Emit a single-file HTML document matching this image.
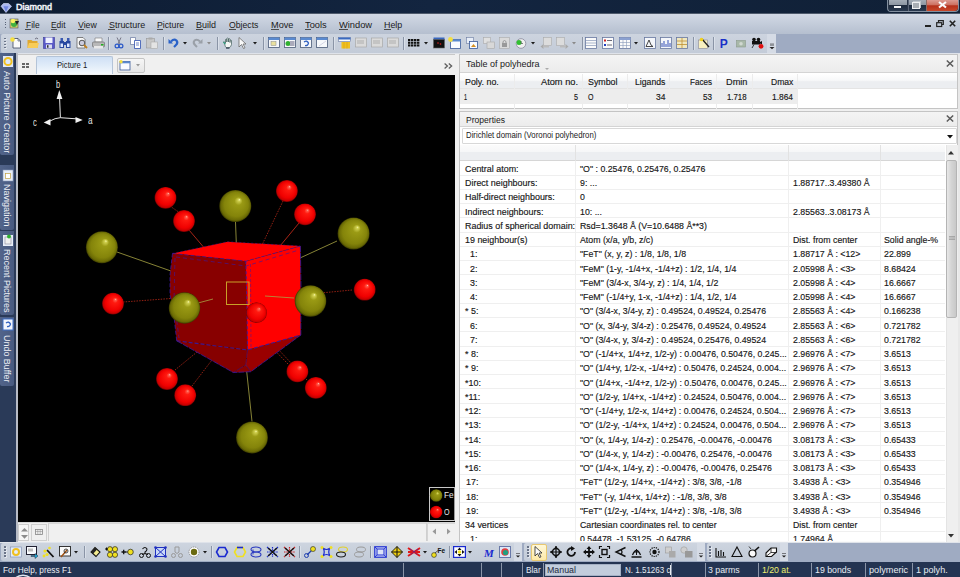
<!DOCTYPE html>
<html><head><meta charset="utf-8"><title>Diamond</title><style>
*{margin:0;padding:0;box-sizing:border-box}
html,body{width:960px;height:577px;overflow:hidden;background:#f0f0f0;font-family:"Liberation Sans",sans-serif;font-size:9px;color:#1e1e1e}
.a{position:absolute}
.t{position:absolute;white-space:pre;line-height:1}
.tb{-webkit-text-stroke:0.2px currentColor}
svg{position:absolute;overflow:visible}
</style></head><body>
<div class="a" style="left:0px;top:0px;width:960px;height:13px;background:linear-gradient(90deg,#0d1c32,#132540 45%,#102036)"></div><div class="a" style="left:0px;top:12.6px;width:960px;height:1.6px;background:#4e5a6c"></div><svg style="left:0px;top:2.5px" width="12" height="10" viewBox="0 0 12 10"><path d="M1 3.2L3.5 0.5H8.5L11.5 3.2L6 9.5Z" fill="#aab8f0" stroke="#dfe6ff" stroke-width="0.6"/><path d="M3.5 3.2H8.5L6 9" fill="#6f86e0"/></svg><div class="t" style="left:16.4px;top:2.71px;font-size:9.2px;color:#f4f6fa;transform:scaleX(0.9783);transform-origin:0 0;-webkit-text-stroke:0.45px #f4f6fa;text-shadow:0 0 1.5px rgba(200,220,240,0.4)">Diamond</div><div class="a" style="left:887px;top:0px;width:71.5px;height:11.5px;border:1px solid #8390a0;border-top:none;border-radius:0 0 4px 4px;background:#2a3648"></div><div class="a" style="left:888.5px;top:0px;width:18.5px;height:10.5px;background:linear-gradient(#a3acb6 0%,#8c96a2 45%,#1e2b3d 50%,#2a3a50 100%)"></div><div class="a" style="left:907.5px;top:0px;width:18px;height:10.5px;background:linear-gradient(#a3acb6 0%,#8c96a2 45%,#1e2b3d 50%,#2a3a50 100%);border-left:1px solid #5a6577"></div><div class="a" style="left:925.6px;top:0px;width:32px;height:10.5px;background:linear-gradient(#dc9a90 0%,#cc7060 45%,#b4301a 52%,#c8482a 100%);border-left:1px solid #8a6a64;border-radius:0 0 4px 0"></div><div class="a" style="left:894px;top:5.5px;width:7px;height:2px;background:#f4f6f8"></div><div class="a" style="left:912px;top:2px;width:7.5px;height:7px;border:1.7px solid #eef0f2;background:#a8aeb4;box-shadow:1px -1px 0 #c0c6cc"></div><svg style="left:937.5px;top:1.3px" width="9" height="7.5" viewBox="0 0 9 7.5"><path d="M1 1L8 6.5M8 1L1 6.5" stroke="#fbfbfb" stroke-width="2.2"/></svg><div class="a" style="left:0px;top:14.2px;width:960px;height:19.8px;background:linear-gradient(#d2d9e5,#b5bfcf)"></div><div class="a" style="left:4.5px;top:19.0px;width:1.2px;height:1.2px;background:#5a6478"></div><div class="a" style="left:4.5px;top:21.6px;width:1.2px;height:1.2px;background:#5a6478"></div><div class="a" style="left:4.5px;top:24.2px;width:1.2px;height:1.2px;background:#5a6478"></div><div class="a" style="left:4.5px;top:26.8px;width:1.2px;height:1.2px;background:#5a6478"></div><svg style="left:9px;top:18px" width="11" height="12" viewBox="0 0 11 12"><rect x="1" y="1" width="8" height="9" fill="#d8d070" stroke="#555" stroke-width="0.6"/><circle cx="5" cy="6" r="3" fill="#40b040"/><path d="M6 3h4l-2 4z" fill="#222"/><circle cx="4" cy="3" r="2.2" fill="#f8f060"/></svg><div class="t" style="left:25.7px;top:20.04px;font-size:9.4px;color:#1b1b1b;transform:scaleX(0.8986);transform-origin:0 0;">File</div><div class="a" style="left:25.4px;top:28.6px;width:5.752795031055898px;height:0.9px;background:#4a4a4a"></div><div class="t" style="left:51.25px;top:20.04px;font-size:9.4px;color:#1b1b1b;transform:scaleX(0.8973);transform-origin:0 0;">Edit</div><div class="a" style="left:50.95px;top:28.6px;width:6.209130434782607px;height:0.9px;background:#4a4a4a"></div><div class="t" style="left:77.8px;top:20.04px;font-size:9.4px;color:#1b1b1b;transform:scaleX(0.9302);transform-origin:0 0;">View</div><div class="a" style="left:77.5px;top:28.6px;width:6.414883720930231px;height:0.9px;background:#4a4a4a"></div><div class="t" style="left:108.7px;top:20.04px;font-size:9.4px;color:#1b1b1b;transform:scaleX(0.9523);transform-origin:0 0;">Structure</div><div class="a" style="left:108.4px;top:28.6px;width:6.553020961775586px;height:0.9px;background:#4a4a4a"></div><div class="t" style="left:157.0px;top:20.04px;font-size:9.4px;color:#1b1b1b;transform:scaleX(0.9304);transform-origin:0 0;">Picture</div><div class="a" style="left:156.7px;top:28.6px;width:6.416077170418004px;height:0.9px;background:#4a4a4a"></div><div class="t" style="left:196.3px;top:20.04px;font-size:9.4px;color:#1b1b1b;transform:scaleX(0.9563);transform-origin:0 0;">Build</div><div class="a" style="left:196.0px;top:28.6px;width:6.57752808988764px;height:0.9px;background:#4a4a4a"></div><div class="t" style="left:228.8px;top:20.04px;font-size:9.4px;color:#1b1b1b;transform:scaleX(0.9258);transform-origin:0 0;">Objects</div><div class="a" style="left:228.5px;top:28.6px;width:7.387610619469026px;height:0.9px;background:#4a4a4a"></div><div class="t" style="left:270.8px;top:20.04px;font-size:9.4px;color:#1b1b1b;transform:scaleX(0.979);transform-origin:0 0;">Move</div><div class="a" style="left:270.5px;top:28.6px;width:8.284049079754602px;height:0.9px;background:#4a4a4a"></div><div class="t" style="left:305.3px;top:20.04px;font-size:9.4px;color:#1b1b1b;transform:scaleX(0.9887);transform-origin:0 0;">Tools</div><div class="a" style="left:305.0px;top:28.6px;width:6.268950749464665px;height:0.9px;background:#4a4a4a"></div><div class="t" style="left:338.8px;top:20.04px;font-size:9.4px;color:#1b1b1b;transform:scaleX(0.9921);transform-origin:0 0;">Window</div><div class="a" style="left:338.5px;top:28.6px;width:9.412921348314603px;height:0.9px;background:#4a4a4a"></div><div class="t" style="left:384.2px;top:20.04px;font-size:9.4px;color:#1b1b1b;transform:scaleX(0.9474);transform-origin:0 0;">Help</div><div class="a" style="left:383.9px;top:28.6px;width:7.01167883211679px;height:0.9px;background:#4a4a4a"></div><div class="a" style="left:925px;top:25px;width:5.5px;height:1.8px;background:#222"></div><svg style="left:936px;top:20.3px" width="8" height="7" viewBox="0 0 8 7"><rect x="0.7" y="2.7" width="5" height="3.8" fill="none" stroke="#222" stroke-width="1.2"/><path d="M2.5 2.5V0.7H7.3V4.5H6" fill="none" stroke="#222" stroke-width="1.2"/></svg><svg style="left:948.6px;top:20.3px" width="7" height="7" viewBox="0 0 7 7"><path d="M0.8 0.8L6.2 6.2M6.2 0.8L0.8 6.2" stroke="#222" stroke-width="1.6"/></svg><div class="a" style="left:0px;top:34px;width:960px;height:19px;background:#9fabc2"></div><div class="a" style="left:0.5px;top:34.3px;width:775px;height:18.3px;background:linear-gradient(#cdd4df,#c3cbd8);border-radius:2px"></div><div class="a" style="left:767px;top:34.3px;width:8.5px;height:18.3px;background:#d5dbe5"></div><svg style="left:767.5px;top:44px" width="7" height="6" viewBox="0 0 7 6"><path d="M2 0H6M2 1.2H6" stroke="#333" stroke-width="0.6"/><path d="M1.5 3H6.5L4 5.2Z" fill="#222"/></svg><div class="a" style="left:0px;top:52.6px;width:960px;height:1.2px;background:#dfe3ea"></div><div class="a" style="left:4px;top:37.5px;width:1.5px;height:1.5px;background:#6a7488;box-shadow:0.7px 0.7px 0 #f4f6fa"></div><div class="a" style="left:4px;top:40.5px;width:1.5px;height:1.5px;background:#6a7488;box-shadow:0.7px 0.7px 0 #f4f6fa"></div><div class="a" style="left:4px;top:43.5px;width:1.5px;height:1.5px;background:#6a7488;box-shadow:0.7px 0.7px 0 #f4f6fa"></div><div class="a" style="left:4px;top:46.5px;width:1.5px;height:1.5px;background:#6a7488;box-shadow:0.7px 0.7px 0 #f4f6fa"></div><svg style="left:10px;top:37px" width="12" height="12" viewBox="0 0 12 12"><path d="M3 1.5H8L10.5 4V11H3Z" fill="#fafafa" stroke="#3c4660" stroke-width="0.8"/><path d="M8 1.5V4H10.5" fill="none" stroke="#3c4660" stroke-width="0.6"/><circle cx="2.5" cy="2.5" r="2.3" fill="#f6e040"/></svg><svg style="left:26.5px;top:37px" width="12" height="12" viewBox="0 0 12 12"><path d="M0.5 3H4.5L5.5 4H10.5V11H0.5Z" fill="#e0a830"/><path d="M2 6H12L10.5 11H0.5Z" fill="#f8cc58"/><path d="M8 2Q10 0 11 2" stroke="#556" fill="none" stroke-width="0.8"/></svg><svg style="left:43px;top:37px" width="12" height="12" viewBox="0 0 12 12"><rect x="0.5" y="0.5" width="11" height="11" fill="#5a5ac8" stroke="#3a3a98" stroke-width="0.6"/><rect x="2.5" y="0.5" width="7" height="5.5" fill="#eef0ff"/><rect x="3" y="7.5" width="6" height="4" fill="#d8dcf0"/><rect x="4" y="8.2" width="1.5" height="2.5" fill="#333"/></svg><svg style="left:59px;top:37px" width="12" height="12" viewBox="0 0 12 12"><rect x="0.5" y="4" width="4.5" height="7" fill="#2848a0"/><rect x="7" y="4" width="4.5" height="7" fill="#2848a0"/><rect x="4" y="5" width="4" height="3" fill="#2848a0"/><rect x="1.5" y="1" width="2.5" height="3" fill="#3858b0"/><rect x="8" y="1" width="2.5" height="3" fill="#3858b0"/><rect x="1.5" y="6.5" width="2.5" height="3.5" fill="#dde8ff"/><rect x="8" y="6.5" width="2.5" height="3.5" fill="#dde8ff"/></svg><svg style="left:76px;top:37px" width="12" height="12" viewBox="0 0 12 12"><path d="M1 0.5H7L9 2.5V11H1Z" fill="#f8f8f8" stroke="#555" stroke-width="0.7"/><circle cx="6" cy="6" r="2.8" fill="#ccd" stroke="#555" stroke-width="1"/><path d="M8 8L11 11" stroke="#c08020" stroke-width="1.8"/></svg><svg style="left:92px;top:37px" width="13" height="12" viewBox="0 0 13 12"><path d="M3 1H10V5H3Z" fill="#fafafa" stroke="#777" stroke-width="0.6"/><rect x="0.5" y="5" width="12" height="5" rx="1" fill="#b8b8b8" stroke="#666" stroke-width="0.6"/><rect x="2" y="9" width="9" height="2.5" fill="#e8e8e8"/><rect x="9" y="7" width="2.5" height="1.5" fill="#20b020"/></svg><div class="a" style="left:108.3px;top:37px;width:1px;height:13px;background:#8a94a6;box-shadow:1px 0 0 rgba(240,244,250,0.45)"></div><svg style="left:115px;top:37px" width="8" height="12" viewBox="0 0 8 12"><path d="M2 0.5L5 7M6 0.5L3 7" stroke="#778" stroke-width="1"/><circle cx="2" cy="9" r="1.9" fill="none" stroke="#2a58c8" stroke-width="1.2"/><circle cx="6" cy="9" r="1.9" fill="none" stroke="#2a58c8" stroke-width="1.2"/></svg><svg style="left:130px;top:37px" width="11" height="12" viewBox="0 0 11 12"><path d="M0.5 0.5H5.5V7.5H0.5Z" fill="#fff" stroke="#6878a0" stroke-width="0.7"/><path d="M4.5 3.5H10.5V11.5H4.5Z" fill="#fff" stroke="#3050b0" stroke-width="0.8"/><path d="M6 6H9M6 8H9" stroke="#3050b0" stroke-width="0.7"/></svg><svg style="left:146px;top:37px" width="12" height="12" viewBox="0 0 12 12"><rect x="0.5" y="1.5" width="8" height="9.5" fill="#c8c8c8" stroke="#999" stroke-width="0.6"/><rect x="2.5" y="0.5" width="4" height="2" fill="#aaa"/><rect x="5" y="5" width="6.5" height="6.5" fill="#e4e4e4" stroke="#aaa" stroke-width="0.6"/></svg><div class="a" style="left:162.5px;top:37px;width:1px;height:13px;background:#8a94a6;box-shadow:1px 0 0 rgba(240,244,250,0.45)"></div><svg style="left:168px;top:37px" width="11" height="12" viewBox="0 0 11 12"><path d="M3 4.5Q6 1.5 8.5 3.5Q10.5 6 7.5 8.5L6 10" fill="none" stroke="#2a62c8" stroke-width="2.2"/><path d="M0.5 2V6.5H5Z" fill="#2a62c8"/></svg><svg style="left:183px;top:41.5px" width="4" height="3" viewBox="0 0 4 3"><path d="M0 0H4L2 2.5Z" fill="#1a1a1a"/></svg><svg style="left:192.5px;top:37px" width="10" height="12" viewBox="0 0 10 12"><path d="M7 4.5Q4 1.5 1.5 3.5Q-0.5 6 2.5 8.5L4 10" fill="none" stroke="#9aa0a8" stroke-width="2"/><path d="M9.5 2V6.5H5Z" fill="#9aa0a8"/></svg><svg style="left:207px;top:41.5px" width="4" height="3" viewBox="0 0 4 3"><path d="M0 0H4L2 2.5Z" fill="#8a8a8a"/></svg><div class="a" style="left:216.7px;top:37px;width:1px;height:13px;background:#8a94a6;box-shadow:1px 0 0 rgba(240,244,250,0.45)"></div><svg style="left:221.5px;top:37px" width="12" height="12" viewBox="0 0 12 12"><path d="M2.5 6.5Q1 5 2 4.5L3.5 6V2.5Q4 1.5 4.8 2.5V5V1.5Q5.6 0.6 6.4 1.5V5V2Q7.2 1.2 8 2V5.5V3.5Q8.8 2.8 9.5 3.5V7.5Q9 10 7 10.8H4.5Q3 10 2.5 6.5Z" fill="#f4f6f4" stroke="#3c5a58" stroke-width="0.7"/><path d="M1.5 5.2L3.5 7" stroke="#2a9a7a" stroke-width="1.2"/><path d="M4 11H7.5" stroke="#2a3848" stroke-width="1.2"/></svg><svg style="left:238px;top:37px" width="8" height="12" viewBox="0 0 8 12"><path d="M1 0.5V10L3.5 7.5L5.5 11.5L7 10.8L5 7H8Z" fill="#fafafa" stroke="#6a6a6a" stroke-width="0.8"/></svg><svg style="left:253px;top:41.5px" width="4" height="3" viewBox="0 0 4 3"><path d="M0 0H4L2 2.5Z" fill="#1a1a1a"/></svg><div class="a" style="left:262.5px;top:37px;width:1px;height:13px;background:#8a94a6;box-shadow:1px 0 0 rgba(240,244,250,0.45)"></div><svg style="left:267.5px;top:37px" width="12" height="12" viewBox="0 0 12 12"><rect x="0.5" y="0.5" width="11" height="10" fill="#f6f8fb" stroke="#4a5a78" stroke-width="0.8"/><rect x="0.5" y="0.5" width="11" height="2.5" fill="#5a8ad0"/><rect x="3" y="4.5" width="5" height="4" fill="#e8e0a0" stroke="#888" stroke-width="0.5"/></svg><svg style="left:283.5px;top:37px" width="12" height="12" viewBox="0 0 12 12"><rect x="0.5" y="0.5" width="11" height="10" fill="#f6f8fb" stroke="#4a5a78" stroke-width="0.8"/><rect x="0.5" y="0.5" width="11" height="2.5" fill="#5a8ad0"/><circle cx="4" cy="6.5" r="2.5" fill="#30b030"/><rect x="6" y="4" width="4.5" height="5" fill="#aab" /></svg><svg style="left:300px;top:37px" width="12" height="12" viewBox="0 0 12 12"><rect x="0.5" y="0.5" width="11" height="10" fill="#f6f8fb" stroke="#4a5a78" stroke-width="0.8"/><rect x="0.5" y="0.5" width="11" height="2.5" fill="#5a8ad0"/><path d="M4 5Q7 3 8.5 6Q8 9 5 8.5" fill="none" stroke="#3060c0" stroke-width="1.3"/></svg><svg style="left:316.3px;top:37px" width="12" height="12" viewBox="0 0 12 12"><rect x="0.5" y="0.5" width="11" height="10" fill="#f6f8fb" stroke="#4a5a78" stroke-width="0.8"/><rect x="0.5" y="0.5" width="11" height="2.5" fill="#5a8ad0"/><path d="M3 9L10 4" stroke="#ccd" stroke-width="0.8"/></svg><div class="a" style="left:332.5px;top:37px;width:1px;height:13px;background:#8a94a6;box-shadow:1px 0 0 rgba(240,244,250,0.45)"></div><svg style="left:337.5px;top:37px" width="13" height="12" viewBox="0 0 13 12"><rect x="0.5" y="0.5" width="12" height="4" fill="#fafcff" stroke="#6a7aa0" stroke-width="0.6"/><rect x="0.5" y="0.5" width="12" height="2" fill="#3a6ac0"/><rect x="3.5" y="5" width="8.5" height="6.5" fill="#f0c020"/><path d="M6 5V11.5M9 5V11.5" stroke="#d8a010" stroke-width="0.6"/></svg><svg style="left:355px;top:37px" width="12" height="12" viewBox="0 0 12 12"><rect x="0.5" y="1" width="11" height="9" fill="#dadada" stroke="#a8a8a8" stroke-width="0.7"/><rect x="2" y="3" width="7" height="4" fill="#c4c4c4"/></svg><svg style="left:370.8px;top:37px" width="12" height="12" viewBox="0 0 12 12"><rect x="0.5" y="1" width="11" height="9" fill="#dadada" stroke="#a8a8a8" stroke-width="0.7"/><rect x="2" y="3" width="7" height="4" fill="#c4c4c4"/></svg><svg style="left:386.7px;top:37px" width="12" height="12" viewBox="0 0 12 12"><rect x="0.5" y="1" width="11" height="9" fill="#dadada" stroke="#a8a8a8" stroke-width="0.7"/><rect x="2" y="3" width="7" height="4" fill="#c4c4c4"/></svg><div class="a" style="left:403.3px;top:37px;width:1px;height:13px;background:#8a94a6;box-shadow:1px 0 0 rgba(240,244,250,0.45)"></div><svg style="left:408.3px;top:39px" width="12" height="8" viewBox="0 0 12 8"><rect x="0" y="0.0" width="2.4" height="2.1" fill="#111"/><rect x="3" y="0.0" width="2.4" height="2.1" fill="#111"/><rect x="6" y="0.0" width="2.4" height="2.1" fill="#111"/><rect x="9" y="0.0" width="2.4" height="2.1" fill="#111"/><rect x="0" y="2.7" width="2.4" height="2.1" fill="#111"/><rect x="3" y="2.7" width="2.4" height="2.1" fill="#111"/><rect x="6" y="2.7" width="2.4" height="2.1" fill="#111"/><rect x="9" y="2.7" width="2.4" height="2.1" fill="#111"/><rect x="0" y="5.4" width="2.4" height="2.1" fill="#111"/><rect x="3" y="5.4" width="2.4" height="2.1" fill="#111"/><rect x="6" y="5.4" width="2.4" height="2.1" fill="#111"/><rect x="9" y="5.4" width="2.4" height="2.1" fill="#111"/></svg><svg style="left:424px;top:41.5px" width="4" height="3" viewBox="0 0 4 3"><path d="M0 0H4L2 2.5Z" fill="#1a1a1a"/></svg><svg style="left:433px;top:37px" width="12" height="12" viewBox="0 0 12 12"><rect x="0.5" y="0.5" width="11" height="3" fill="#3a68c0"/><rect x="0.5" y="2.5" width="11" height="8.5" fill="#111" stroke="#666" stroke-width="0.6"/><circle cx="5" cy="6" r="0.8" fill="#e02020"/><circle cx="7.5" cy="7" r="0.8" fill="#e02020"/></svg><svg style="left:448.3px;top:37px" width="13" height="12" viewBox="0 0 13 12"><rect x="2.5" y="2.5" width="10" height="9" fill="#fafcff" stroke="#3a5a98" stroke-width="0.8"/><rect x="2.5" y="2.5" width="10" height="2" fill="#5a8ad0"/><circle cx="2.5" cy="2.5" r="2.4" fill="#f4e040"/></svg><svg style="left:465.8px;top:37px" width="12" height="12" viewBox="0 0 12 12"><rect x="0.5" y="0.5" width="7" height="6" fill="#e8eef8" stroke="#6a7aa0" stroke-width="0.6"/><rect x="3.5" y="4.5" width="8" height="7" fill="#fafcff" stroke="#3a5a98" stroke-width="0.8"/><path d="M5 10L7.5 7L10 10Z" fill="#d89020"/></svg><svg style="left:482.5px;top:37px" width="12" height="12" viewBox="0 0 12 12"><rect x="0.5" y="0.5" width="7" height="6" fill="#e0e0e0" stroke="#aaa" stroke-width="0.6"/><rect x="4" y="5" width="7.5" height="6.5" fill="#d8d8d8" stroke="#a8a8a8" stroke-width="0.6"/></svg><svg style="left:499.2px;top:37px" width="11" height="12" viewBox="0 0 11 12"><rect x="0.5" y="0.5" width="10" height="11" fill="#dadada" stroke="#aaa" stroke-width="0.6"/><rect x="3" y="6" width="5" height="4" fill="#999"/><path d="M4 6V4.5Q5.5 2.5 7 4.5V6" fill="none" stroke="#999"/></svg><svg style="left:515px;top:37px" width="11" height="12" viewBox="0 0 11 12"><circle cx="6" cy="6.5" r="4.8" fill="#f0f0f0" stroke="#889" stroke-width="0.8"/><circle cx="4" cy="5.5" r="2.5" fill="#30c030"/><path d="M6 4V6.5H8" stroke="#555" stroke-width="0.7" fill="none"/></svg><svg style="left:531px;top:41.5px" width="4" height="3" viewBox="0 0 4 3"><path d="M0 0H4L2 2.5Z" fill="#1a1a1a"/></svg><svg style="left:540px;top:37px" width="12" height="12" viewBox="0 0 12 12"><rect x="3.5" y="0.5" width="8" height="8" fill="#dcdcdc" stroke="#aaa" stroke-width="0.6"/><path d="M0.5 9.5L3.5 7V12Z" fill="#aaa"/><rect x="3" y="8.5" width="6" height="2" fill="#bbb"/></svg><svg style="left:555.8px;top:37px" width="13" height="12" viewBox="0 0 13 12"><rect x="0.5" y="0.5" width="8" height="8" fill="#dcdcdc" stroke="#aaa" stroke-width="0.6"/><path d="M12.5 9.5L9.5 7V12Z" fill="#aaa"/><rect x="4" y="8.5" width="6" height="2" fill="#bbb"/></svg><svg style="left:572px;top:41.5px" width="4" height="3" viewBox="0 0 4 3"><path d="M0 0H4L2 2.5Z" fill="#8a8a8a"/></svg><div class="a" style="left:582px;top:37px;width:1px;height:13px;background:#8a94a6;box-shadow:1px 0 0 rgba(240,244,250,0.45)"></div><svg style="left:585.2px;top:37px" width="12" height="12" viewBox="0 0 12 12"><rect x="0.5" y="0.5" width="11" height="11" fill="#fafafa" stroke="#6878a0" stroke-width="0.8"/><path d="M1 3.5H11M1 6H11M1 8.5H11" stroke="#8898b8" stroke-width="0.7"/></svg><svg style="left:601.9px;top:37px" width="12" height="12" viewBox="0 0 12 12"><rect x="0.5" y="0.5" width="11" height="11" fill="#fafafa" stroke="#6878a0" stroke-width="0.8"/><rect x="2" y="2.5" width="2" height="2" fill="#d02020"/><rect x="2" y="7" width="2" height="2" fill="#2040c0"/><path d="M5 3.5H10M5 8H10" stroke="#445" stroke-width="0.8"/></svg><svg style="left:618.5px;top:37px" width="12" height="12" viewBox="0 0 12 12"><rect x="0.5" y="0.5" width="11" height="11" fill="#fafafa" stroke="#6878a0" stroke-width="0.8"/><rect x="0.5" y="0.5" width="11" height="2.5" fill="#8aa0d0"/><path d="M1 5.5H11M1 8.5H11M4 3V11M7.5 3V11" stroke="#8898b8" stroke-width="0.6"/></svg><svg style="left:634px;top:41.5px" width="4" height="3" viewBox="0 0 4 3"><path d="M0 0H4L2 2.5Z" fill="#1a1a1a"/></svg><svg style="left:643.5px;top:37px" width="12" height="12" viewBox="0 0 12 12"><rect x="0.5" y="0.5" width="11" height="11" fill="#f4f6fa" stroke="#6878a0" stroke-width="0.8"/><path d="M2 9.5L5 3L7 8L9 9.5H2" fill="none" stroke="#333" stroke-width="0.9"/></svg><svg style="left:660px;top:37px" width="12" height="12" viewBox="0 0 12 12"><rect x="0.5" y="0.5" width="11" height="11" fill="#f4f6fa" stroke="#6878a0" stroke-width="0.8"/><path d="M2 10V6M4 10V4M6 10V7M8 10V3M10 10V6" stroke="#2040b0" stroke-width="0.9"/></svg><svg style="left:676px;top:37px" width="12" height="12" viewBox="0 0 12 12"><rect x="0.5" y="0.5" width="11" height="11" fill="#f0e8c0" stroke="#6878a0" stroke-width="0.8"/><path d="M1 4H11M1 7.5H11M6 1V11" stroke="#c09030" stroke-width="0.8"/></svg><div class="a" style="left:692.5px;top:37px;width:1px;height:13px;background:#8a94a6;box-shadow:1px 0 0 rgba(240,244,250,0.45)"></div><svg style="left:697.7px;top:37px" width="12" height="12" viewBox="0 0 12 12"><rect x="0.5" y="3" width="9" height="8.5" fill="#f8f0c0" stroke="#889" stroke-width="0.6"/><path d="M4 2L11 10" stroke="#222" stroke-width="1.4"/><circle cx="3.5" cy="2.5" r="1.8" fill="#f0d020"/></svg><div class="a" style="left:713.3px;top:37px;width:1px;height:13px;background:#8a94a6;box-shadow:1px 0 0 rgba(240,244,250,0.45)"></div><div class="t" style="left:719.8px;top:38.34px;font-size:12px;color:#1a30c8;font-weight:bold">P</div><svg style="left:736px;top:38px" width="10" height="10" viewBox="0 0 10 10"><rect x="0.5" y="2.5" width="9" height="6.5" fill="#a8b8a8" stroke="#8a9a8a" stroke-width="0.6"/><circle cx="5" cy="5.8" r="1.8" fill="#d0d8d0"/></svg><svg style="left:750.8px;top:37px" width="13" height="12" viewBox="0 0 13 12"><circle cx="3" cy="2.5" r="1.8" fill="#111"/><circle cx="7.5" cy="2.5" r="1.8" fill="#111"/><rect x="1" y="4" width="8" height="3.5" fill="#111"/><path d="M9 5L11 4V7.5L9 6.5Z" fill="#111"/><path d="M3 7.5L1 11" stroke="#111" stroke-width="0.8"/><circle cx="10" cy="9.3" r="2.4" fill="#e01010"/></svg>
<div class="a" style="left:0px;top:53px;width:15.6px;height:489px;background:#2a3a58"></div><div class="a" style="left:15.6px;top:53px;width:2.4px;height:489px;background:#b8bcc6"></div><div class="a" style="left:0px;top:53px;width:14.4px;height:102px;background:linear-gradient(90deg,#52648a,#485a80);border-radius:0 0 2px 2px"></div><div class="t" style="left:11.7px;top:71.30px;font-size:9.6px;color:#eef0f6;transform-origin:0 0;transform:rotate(90deg) scaleX(0.9462)">Auto Picture Creator</div><div class="a" style="left:0px;top:164.9px;width:14.4px;height:64.9px;background:linear-gradient(90deg,#52648a,#485a80);border-radius:0 0 2px 2px"></div><div class="t" style="left:11.7px;top:184.30px;font-size:9.6px;color:#eef0f6;transform-origin:0 0;transform:rotate(90deg) scaleX(0.9347)">Navigation</div><div class="a" style="left:0px;top:230.8px;width:14.4px;height:84.69999999999999px;background:linear-gradient(90deg,#52648a,#485a80);border-radius:0 0 2px 2px"></div><div class="t" style="left:11.7px;top:248.90px;font-size:9.6px;color:#eef0f6;transform-origin:0 0;transform:rotate(90deg) scaleX(0.9384)">Recent Pictures</div><div class="a" style="left:0px;top:316.5px;width:14.4px;height:69.30000000000001px;background:linear-gradient(90deg,#52648a,#485a80);border-radius:0 0 2px 2px"></div><div class="t" style="left:11.7px;top:334.70px;font-size:9.6px;color:#eef0f6;transform-origin:0 0;transform:rotate(90deg) scaleX(0.9320)">Undo Buffer</div><svg style="left:2.5px;top:55.5px" width="10" height="11" viewBox="0 0 10 11"><rect x="0" y="0" width="10" height="11" fill="#dfe8f8"/><circle cx="5" cy="5.5" r="3.6" fill="none" stroke="#f0c020" stroke-width="2"/></svg><svg style="left:2.5px;top:169.5px" width="10" height="11" viewBox="0 0 10 11"><rect x="0" y="0" width="10" height="11" fill="#e8eef8" stroke="#8898b8" stroke-width="0.6"/><rect x="2.5" y="3.5" width="5" height="5" fill="#fff" stroke="#c0a040" stroke-width="0.7"/></svg><svg style="left:2.5px;top:234px" width="10" height="12" viewBox="0 0 10 12"><rect x="0" y="1" width="10" height="11" fill="#e8eef8"/><rect x="2" y="3" width="6" height="7" fill="#f0f0f0" stroke="#889" stroke-width="0.6"/><circle cx="6" cy="2.5" r="2" fill="#30b030"/></svg><svg style="left:2.5px;top:319px" width="10" height="12" viewBox="0 0 10 12"><rect x="0" y="0" width="10" height="11" fill="#f4f6fc"/><rect x="0" y="0" width="10" height="11" fill="none" stroke="#4070c8" stroke-width="1"/><path d="M3 4Q6 2 7.5 5Q7 8 4 7.5" fill="none" stroke="#3060c0" stroke-width="1.3"/></svg>
<div class="a" style="left:18px;top:53.8px;width:437px;height:21px;background:#f0f0f0;border-top:1px solid #c8c8c8"></div><div class="a" style="left:22px;top:62.5px;width:3px;height:2.2px;background:#666"></div><div class="a" style="left:26.3px;top:62.5px;width:3px;height:2.2px;background:#666"></div><div class="a" style="left:22px;top:66.3px;width:3px;height:2.2px;background:#666"></div><div class="a" style="left:26.3px;top:66.3px;width:3px;height:2.2px;background:#666"></div><div class="a" style="left:36px;top:56.3px;width:76.5px;height:18px;background:linear-gradient(#cfe0f5,#e2edf9 55%,#f6f9fd);border:1px solid #b4c4d8;border-bottom:none;border-radius:2px 2px 0 0"></div><div class="t" style="left:57.2px;top:61.11px;font-size:9.2px;color:#1a1a1a;transform:scaleX(0.8348);transform-origin:0 0;">Picture 1</div><div class="a" style="left:116.5px;top:58px;width:28px;height:15px;background:linear-gradient(#f6f6f6,#e6e6e6);border:1px solid #c4c4c4;border-radius:2px"></div><svg style="left:118.5px;top:59.5px" width="12" height="11" viewBox="0 0 12 11"><rect x="1" y="1.5" width="10" height="8.5" fill="#fafcff" stroke="#3a5a98" stroke-width="0.8"/><rect x="1" y="1.5" width="10" height="1.8" fill="#5a8ad0"/><circle cx="2" cy="1.8" r="1.7" fill="#f4e040"/></svg><svg style="left:136.2px;top:63.5px" width="4" height="3" viewBox="0 0 4 3"><path d="M0 0H4L2 2.5Z" fill="#999"/></svg><svg style="left:443.8px;top:62.8px" width="9" height="6" viewBox="0 0 9 6"><path d="M0.6 0.6L3.4 3L0.6 5.4M4.8 0.6L7.6 3L4.8 5.4" fill="none" stroke="#5e5e5e" stroke-width="1.3"/></svg><div class="a" style="left:18px;top:74.6px;width:437px;height:447px;background:#000"></div><div class="a" style="left:18px;top:521.5px;width:437px;height:20px;background:#f0f0f0;border-top:1px solid #d8d8d8"></div><div class="a" style="left:18.2px;top:523.5px;width:10.8px;height:17.3px;border:1px solid #cdcdcd;background:#f6f6f6"></div><svg style="left:19.5px;top:526.5px" width="9" height="13" viewBox="0 0 9 13"><path d="M1 4.6H8L4.5 1Z" fill="#8c8c8c"/><path d="M1 8H8L4.5 11.8Z" fill="#8c8c8c"/></svg><div class="a" style="left:31.2px;top:523.5px;width:15.6px;height:17.3px;border:1px solid #d0d0d0;background:#f0f0f0"></div><svg style="left:34.5px;top:528.5px" width="8" height="6" viewBox="0 0 8 6"><rect x="0.5" y="0.5" width="7" height="5" fill="none" stroke="#888" stroke-width="0.8"/><path d="M0.5 2.5H7.5M2.8 0.5V5.5M5.2 0.5V5.5" stroke="#888" stroke-width="0.5"/></svg><div class="a" style="left:47.5px;top:523px;width:380px;height:18px;border-left:1px solid #d0d0d0;border-top:1px solid #d8d8d8"></div><div class="a" style="left:425.5px;top:523px;width:1px;height:18px;background:#cfcfcf"></div><div class="a" style="left:427px;top:523px;width:28px;height:18px;border-left:1px solid #d4d4d4;border-top:1px solid #d8d8d8"></div><svg style="left:432px;top:528px" width="5" height="7" viewBox="0 0 5 7"><path d="M4 0.5V6.5L0.5 3.5Z" fill="#999"/></svg><svg style="left:445.5px;top:528px" width="5" height="7" viewBox="0 0 5 7"><path d="M1 0.5V6.5L4.5 3.5Z" fill="#999"/></svg>
<svg style="left:0;top:0" width="960" height="577" viewBox="0 0 960 577"><defs>
<radialGradient id="gr" cx="0.5" cy="0.5" r="0.5" fx="0.63" fy="0.3"><stop offset="0" stop-color="#ffc8c0"/><stop offset="0.07" stop-color="#ff6050"/><stop offset="0.25" stop-color="#ff1a10"/><stop offset="0.75" stop-color="#f00000"/><stop offset="0.92" stop-color="#c80000"/><stop offset="1" stop-color="#700000"/></radialGradient>
<radialGradient id="gy" cx="0.5" cy="0.5" r="0.5" fx="0.63" fy="0.3"><stop offset="0" stop-color="#f8f8b0"/><stop offset="0.07" stop-color="#d0d050"/><stop offset="0.25" stop-color="#9a9a14"/><stop offset="0.75" stop-color="#84840a"/><stop offset="0.92" stop-color="#6a6a04"/><stop offset="1" stop-color="#3a3a00"/></radialGradient>
</defs><line x1="235.5" y1="222" x2="237" y2="262" stroke="#a8a444" stroke-width="0.8"/><line x1="117" y1="252" x2="205" y2="283" stroke="#a8a444" stroke-width="0.8"/><line x1="337" y1="241" x2="300" y2="258" stroke="#a8a444" stroke-width="0.8"/><line x1="252" y1="421.5" x2="246" y2="365" stroke="#a8a444" stroke-width="0.8"/><line x1="189" y1="230" x2="206" y2="250" stroke="#b82818" stroke-width="0.9"/><line x1="170" y1="206" x2="180" y2="213" stroke="#b82818" stroke-width="0.8" stroke-dasharray="1.5,1.2"/><line x1="283" y1="201" x2="262" y2="245" stroke="#b82818" stroke-width="0.8" stroke-dasharray="1.5,1.2"/><line x1="299" y1="223" x2="280" y2="246" stroke="#b82818" stroke-width="0.9"/><line x1="123" y1="302" x2="205" y2="296" stroke="#b82818" stroke-width="0.8" stroke-dasharray="1.5,1.2"/><line x1="352" y1="290" x2="300" y2="295" stroke="#b82818" stroke-width="0.8" stroke-dasharray="1.5,1.2"/><line x1="175" y1="370" x2="230" y2="325" stroke="#b82818" stroke-width="0.8" stroke-dasharray="1.5,1.2"/><line x1="192" y1="386" x2="235" y2="330" stroke="#b82818" stroke-width="0.8" stroke-dasharray="1.5,1.2"/><line x1="288" y1="364" x2="255" y2="330" stroke="#b82818" stroke-width="0.8" stroke-dasharray="1.5,1.2"/><line x1="307" y1="380" x2="262" y2="332" stroke="#b82818" stroke-width="0.8" stroke-dasharray="1.5,1.2"/><circle cx="165.5" cy="197.8" r="10.9" fill="url(#gr)"/><circle cx="184" cy="221" r="10.9" fill="url(#gr)"/><circle cx="286.9" cy="191" r="10.9" fill="url(#gr)"/><circle cx="305" cy="214.3" r="10.9" fill="url(#gr)"/><circle cx="113" cy="303.6" r="10.9" fill="url(#gr)"/><circle cx="364.7" cy="289.7" r="10.9" fill="url(#gr)"/><circle cx="167" cy="379" r="10.9" fill="url(#gr)"/><circle cx="185.2" cy="395.2" r="10.9" fill="url(#gr)"/><circle cx="297.4" cy="371.4" r="10.9" fill="url(#gr)"/><circle cx="315.8" cy="387.9" r="10.9" fill="url(#gr)"/><circle cx="235.3" cy="206" r="16" fill="url(#gy)"/><circle cx="101.9" cy="247.3" r="16" fill="url(#gy)"/><circle cx="353.6" cy="233.5" r="16" fill="url(#gy)"/><circle cx="252" cy="437.5" r="15.9" fill="url(#gy)"/><polygon points="172.5,253.4 227.6,241.7 300.4,246.1 245.8,261.2" fill="#ff0000" stroke="none" stroke-width="0.8"/><polygon points="176.7,340.8 247.5,350 245.8,365 233.3,372.5" fill="#860000" stroke="none" stroke-width="0.8"/><polygon points="247.5,350 300.8,335 250.8,371.7 245.8,365" fill="#9a0000" stroke="none" stroke-width="0.8"/><polygon points="245.8,365 250.8,371.7 233.3,372.5" fill="#8a0000" stroke="none" stroke-width="0.8"/><polygon points="172.5,253.4 245.8,261.2 247.5,350 176.7,340.8 173.3,310 170,295 170,275" fill="#880000" stroke="none" stroke-width="0.8"/><polygon points="245.8,261.2 300.4,246.1 300.8,335 247.5,350" fill="#ff0000" stroke="none" stroke-width="0.8"/><polyline points="172.5,253.4 245.8,261.2 300.4,246.1" fill="none" stroke="#3a1aa0" stroke-width="0.9" stroke-dasharray="4,2" opacity="0.8"/><polyline points="176,257 246,266 299,250" fill="none" stroke="#3a1aa0" stroke-width="0.9" stroke-dasharray="4,3" opacity="0.7"/><polyline points="172.5,253.4 227.6,241.7 300.4,246.1" fill="none" stroke="#3a1aa0" stroke-width="0.8" stroke-dasharray="2,2" opacity="0.6"/><polyline points="245.8,261.2 247,305 247.5,350" fill="none" stroke="#3a1aa0" stroke-width="1" stroke-dasharray="3,2" opacity="0.9"/><polyline points="250.5,264 251,347" fill="none" stroke="#3a1aa0" stroke-width="0.8" stroke-dasharray="3,2" opacity="0.6"/><polyline points="176.7,340.8 247.5,350 300.8,335" fill="none" stroke="#3a1aa0" stroke-width="1.1" stroke-dasharray="4,2" opacity="0.9"/><polyline points="172.5,253.4 170,275 170,295 173.3,310 176.7,340.8" fill="none" stroke="#3a1aa0" stroke-width="1" stroke-dasharray="4,2" opacity="0.8"/><polyline points="175,258 174,300 179,338" fill="none" stroke="#3a1aa0" stroke-width="0.9" stroke-dasharray="4,3" opacity="0.7"/><polyline points="300.4,246.1 301,290 300.8,335" fill="none" stroke="#3a1aa0" stroke-width="1" stroke-dasharray="6,1" opacity="0.8"/><polyline points="176.7,340.8 233.3,372.5 250.8,371.7 300.8,335" fill="none" stroke="#3a1aa0" stroke-width="0.9" stroke-dasharray="6,1" opacity="0.9"/><polyline points="247.5,350 245.8,365 233.3,372.5" fill="none" stroke="#3a1aa0" stroke-width="0.7" stroke-dasharray="8,1" opacity="0.7"/><polyline points="245.8,365 250.8,371.7" fill="none" stroke="#3a1aa0" stroke-width="0.7" stroke-dasharray="8,1" opacity="0.7"/><rect x="226.5" y="282" width="22.5" height="22.5" fill="none" stroke="#c8a028" stroke-width="1"/><line x1="198" y1="303" x2="213" y2="299" stroke="#a8a444" stroke-width="0.8"/><line x1="294" y1="298" x2="265" y2="296" stroke="#a8a444" stroke-width="0.8"/><circle cx="184.5" cy="308" r="15.7" fill="url(#gy)"/><circle cx="310.5" cy="301" r="15.8" fill="url(#gy)"/><circle cx="256.6" cy="312.8" r="10.3" fill="url(#gr)"/><path d="M60.4 117.7L59.6 98" stroke="#e6e6e6" stroke-width="1" fill="none"/><path d="M59.3 90L56.6 99H62.4Z" fill="#f0f0f0"/><path d="M50 121Q55 118 60.4 117.7L76 118.8" stroke="#e6e6e6" stroke-width="1" fill="none"/><path d="M82.7 120L75.5 117V123Z" fill="#f0f0f0"/><path d="M43.7 122.6L50.5 119V125.5Z" fill="#f0f0f0"/></svg><div class="t" style="left:56.3px;top:80.13px;font-size:10px;color:#e4e4e4;transform:scaleX(0.7387);transform-origin:0 0;">b</div><div class="t" style="left:87.5px;top:115.94px;font-size:10px;color:#e4e4e4;transform:scaleX(0.8214);transform-origin:0 0;">a</div><div class="t" style="left:33.3px;top:117.94px;font-size:10px;color:#e4e4e4;transform:scaleX(0.76);transform-origin:0 0;">c</div><div class="a" style="left:428.5px;top:487px;width:26px;height:34px;border:1px solid #c8c8c8;border-right-color:#9a9a9a;background:#000"></div><svg style="left:0;top:0" width="960" height="577"><circle cx="436.2" cy="495.5" r="6.3" fill="url(#gy)"/><circle cx="436.2" cy="512" r="6.3" fill="url(#gr)"/></svg><div class="t" style="left:444.0px;top:491.15px;font-size:8.8px;color:#e8e8e8;transform:scaleX(0.9364);transform-origin:0 0;">Fe</div><div class="t" style="left:444.0px;top:508.15px;font-size:8.8px;color:#e8e8e8;transform:scaleX(0.8159);transform-origin:0 0;">O</div>
<div class="a" style="left:455px;top:53.8px;width:4.5px;height:488px;background:#f0f0f0"></div><div class="a" style="left:459.3px;top:54.3px;width:499px;height:54.5px;background:#fff;border:1px solid #c4c4c4"></div><div class="a" style="left:460.3px;top:55.3px;width:497px;height:18.2px;background:linear-gradient(#f4f4f4,#ececec);border-bottom:1px solid #d4d4d4"></div><div class="t" style="left:465.7px;top:58.70px;font-size:9.8px;color:#1a1a1a;transform:scaleX(0.9174);transform-origin:0 0;">Table of polyhedra</div><svg style="left:544.5px;top:67.5px" width="4" height="3" viewBox="0 0 4 3"><path d="M0 0H4L2 2Z" fill="#aaa"/></svg><svg style="left:946.3px;top:60.2px" width="8" height="7" viewBox="0 0 8 7"><path d="M0.8 0.5L7.2 6.5M7.2 0.5L0.8 6.5" stroke="#5a5a5a" stroke-width="1.5"/></svg><div class="a" style="left:460.3px;top:73.5px;width:497px;height:15px;background:linear-gradient(#ffffff,#f7f8f9 45%,#eceef1 55%,#eceef1);border-bottom:1px solid #e4e4e4"></div><div class="a" style="left:514.3px;top:73.5px;width:1px;height:35px;background:#ececec"></div><div class="a" style="left:581.8px;top:73.5px;width:1px;height:35px;background:#ececec"></div><div class="a" style="left:626.9px;top:73.5px;width:1px;height:35px;background:#ececec"></div><div class="a" style="left:669.4px;top:73.5px;width:1px;height:35px;background:#ececec"></div><div class="a" style="left:715.9px;top:73.5px;width:1px;height:35px;background:#ececec"></div><div class="a" style="left:751.9px;top:73.5px;width:1px;height:35px;background:#ececec"></div><div class="a" style="left:797px;top:73.5px;width:1px;height:35px;background:#ececec"></div><div class="a" style="left:460.3px;top:88.5px;width:337px;height:15px;background:#ededed"></div><div class="t" style="left:464.6px;top:77.07px;font-size:9.6px;color:#161616;transform:scaleX(0.9229);transform-origin:0 0;-webkit-text-stroke:0.15px #161616">Poly. no.</div><div class="t" style="left:541.0px;top:77.07px;font-size:9.6px;color:#161616;transform:scaleX(0.9635);transform-origin:0 0;-webkit-text-stroke:0.15px #161616">Atom no.</div><div class="t" style="left:587.5px;top:77.07px;font-size:9.6px;color:#161616;transform:scaleX(0.9214);transform-origin:0 0;-webkit-text-stroke:0.15px #161616">Symbol</div><div class="t" style="left:634.6px;top:77.07px;font-size:9.6px;color:#161616;transform:scaleX(0.9035);transform-origin:0 0;-webkit-text-stroke:0.15px #161616">Ligands</div><div class="t" style="left:690.0px;top:77.07px;font-size:9.6px;color:#161616;transform:scaleX(0.841);transform-origin:0 0;-webkit-text-stroke:0.15px #161616">Faces</div><div class="t" style="left:726.0px;top:77.07px;font-size:9.6px;color:#161616;transform:scaleX(0.9591);transform-origin:0 0;-webkit-text-stroke:0.15px #161616">Dmin</div><div class="t" style="left:770.6px;top:77.07px;font-size:9.6px;color:#161616;transform:scaleX(0.894);transform-origin:0 0;-webkit-text-stroke:0.15px #161616">Dmax</div><div class="t" style="left:464.0px;top:91.97px;font-size:9.6px;color:#161616;transform:scaleX(0.5631);transform-origin:0 0;-webkit-text-stroke:0.15px #161616">1</div><div class="t" style="left:574.0px;top:91.97px;font-size:9.6px;color:#161616;transform:scaleX(0.7508);transform-origin:0 0;-webkit-text-stroke:0.15px #161616">5</div><div class="t" style="left:587.5px;top:91.97px;font-size:9.6px;color:#161616;transform:scaleX(0.7345);transform-origin:0 0;-webkit-text-stroke:0.15px #161616">O</div><div class="t" style="left:655.6px;top:91.97px;font-size:9.6px;color:#161616;transform:scaleX(0.8821);transform-origin:0 0;-webkit-text-stroke:0.15px #161616">34</div><div class="t" style="left:702.7px;top:91.97px;font-size:9.6px;color:#161616;transform:scaleX(0.8446);transform-origin:0 0;-webkit-text-stroke:0.15px #161616">53</div><div class="t" style="left:727.4px;top:91.97px;font-size:9.6px;color:#161616;transform:scaleX(0.815);transform-origin:0 0;-webkit-text-stroke:0.15px #161616">1.718</div><div class="t" style="left:772.0px;top:91.97px;font-size:9.6px;color:#161616;transform:scaleX(0.8733);transform-origin:0 0;-webkit-text-stroke:0.15px #161616">1.864</div><div class="a" style="left:459.3px;top:111px;width:499px;height:431px;background:#fff;border:1px solid #c4c4c4;border-bottom:none"></div><div class="a" style="left:460.3px;top:112px;width:497px;height:15px;background:linear-gradient(#f4f4f4,#ececec);border-bottom:1px solid #d4d4d4"></div><div class="t" style="left:465.5px;top:114.87px;font-size:9.6px;color:#1a1a1a;transform:scaleX(0.8909);transform-origin:0 0;">Properties</div><svg style="left:946.3px;top:115.3px" width="8" height="7" viewBox="0 0 8 7"><path d="M0.8 0.5L7.2 6.5M7.2 0.5L0.8 6.5" stroke="#5a5a5a" stroke-width="1.5"/></svg><div class="a" style="left:461.5px;top:128.3px;width:495px;height:15.6px;background:#fff;border:1px solid #d8d8d8;border-radius:1px"></div><div class="t" style="left:465.5px;top:131.34px;font-size:8.7px;color:#1a1a1a;transform:scaleX(0.8966);transform-origin:0 0;">Dirichlet domain (Voronoi polyhedron)</div><svg style="left:947.3px;top:134.5px" width="6" height="4" viewBox="0 0 6 4"><path d="M0 0H6L3 3.5Z" fill="#111"/></svg><div class="a" style="left:460.3px;top:145px;width:485px;height:15.5px;background:linear-gradient(#fbfbfb,#f6f7f8 45%,#eceef1 50%,#eceef1);border-bottom:1px solid #d6d6d6"></div><div class="a" style="left:574.8px;top:145px;width:1px;height:15.5px;background:#e2e2e2"></div><div class="a" style="left:788px;top:145px;width:1px;height:15.5px;background:#e2e2e2"></div><div class="a" style="left:879.7px;top:145px;width:1px;height:15.5px;background:#e2e2e2"></div><div class="a" style="left:574.8px;top:160.9px;width:1px;height:382px;background:#efefef"></div><div class="a" style="left:788px;top:160.9px;width:1px;height:382px;background:#efefef"></div><div class="a" style="left:879.7px;top:160.9px;width:1px;height:382px;background:#efefef"></div><div class="a" style="left:460.3px;top:174.65px;width:485px;height:1px;background:#efefef"></div><div class="a" style="left:460.3px;top:188.9px;width:485px;height:1px;background:#efefef"></div><div class="a" style="left:460.3px;top:203.15px;width:485px;height:1px;background:#efefef"></div><div class="a" style="left:460.3px;top:217.4px;width:485px;height:1px;background:#efefef"></div><div class="a" style="left:460.3px;top:231.65px;width:485px;height:1px;background:#efefef"></div><div class="a" style="left:460.3px;top:245.9px;width:485px;height:1px;background:#efefef"></div><div class="a" style="left:460.3px;top:260.15px;width:485px;height:1px;background:#efefef"></div><div class="a" style="left:460.3px;top:274.4px;width:485px;height:1px;background:#efefef"></div><div class="a" style="left:460.3px;top:288.65px;width:485px;height:1px;background:#efefef"></div><div class="a" style="left:460.3px;top:302.9px;width:485px;height:1px;background:#efefef"></div><div class="a" style="left:460.3px;top:317.15px;width:485px;height:1px;background:#efefef"></div><div class="a" style="left:460.3px;top:331.4px;width:485px;height:1px;background:#efefef"></div><div class="a" style="left:460.3px;top:345.65px;width:485px;height:1px;background:#efefef"></div><div class="a" style="left:460.3px;top:359.9px;width:485px;height:1px;background:#efefef"></div><div class="a" style="left:460.3px;top:374.15px;width:485px;height:1px;background:#efefef"></div><div class="a" style="left:460.3px;top:388.4px;width:485px;height:1px;background:#efefef"></div><div class="a" style="left:460.3px;top:402.65px;width:485px;height:1px;background:#efefef"></div><div class="a" style="left:460.3px;top:416.9px;width:485px;height:1px;background:#efefef"></div><div class="a" style="left:460.3px;top:431.15px;width:485px;height:1px;background:#efefef"></div><div class="a" style="left:460.3px;top:445.4px;width:485px;height:1px;background:#efefef"></div><div class="a" style="left:460.3px;top:459.65px;width:485px;height:1px;background:#efefef"></div><div class="a" style="left:460.3px;top:473.9px;width:485px;height:1px;background:#efefef"></div><div class="a" style="left:460.3px;top:488.15px;width:485px;height:1px;background:#efefef"></div><div class="a" style="left:460.3px;top:502.4px;width:485px;height:1px;background:#efefef"></div><div class="a" style="left:460.3px;top:516.65px;width:485px;height:1px;background:#efefef"></div><div class="a" style="left:460.3px;top:530.9px;width:485px;height:1px;background:#efefef"></div><div class="t" style="left:464.6px;top:163.97px;font-size:9.6px;color:#161616;transform:scaleX(0.93);transform-origin:0 0;-webkit-text-stroke:0.15px #161616">Central atom:</div><div class="t" style="left:579.5px;top:163.97px;font-size:9.6px;color:#161616;transform:scaleX(0.915);transform-origin:0 0;-webkit-text-stroke:0.15px #161616">"O" : 0.25476, 0.25476, 0.25476</div><div class="t" style="left:464.6px;top:178.22px;font-size:9.6px;color:#161616;transform:scaleX(0.93);transform-origin:0 0;-webkit-text-stroke:0.15px #161616">Direct neighbours:</div><div class="t" style="left:579.5px;top:178.22px;font-size:9.6px;color:#161616;transform:scaleX(0.915);transform-origin:0 0;-webkit-text-stroke:0.15px #161616">9: ...</div><div class="t" style="left:792.7px;top:178.22px;font-size:9.6px;color:#161616;transform:scaleX(0.915);transform-origin:0 0;-webkit-text-stroke:0.15px #161616">1.88717..3.49380 Å</div><div class="t" style="left:464.6px;top:192.47px;font-size:9.6px;color:#161616;transform:scaleX(0.93);transform-origin:0 0;-webkit-text-stroke:0.15px #161616">Half-direct neighbours:</div><div class="t" style="left:579.5px;top:192.47px;font-size:9.6px;color:#161616;transform:scaleX(0.915);transform-origin:0 0;-webkit-text-stroke:0.15px #161616">0</div><div class="t" style="left:464.6px;top:206.72px;font-size:9.6px;color:#161616;transform:scaleX(0.93);transform-origin:0 0;-webkit-text-stroke:0.15px #161616">Indirect neighbours:</div><div class="t" style="left:579.5px;top:206.72px;font-size:9.6px;color:#161616;transform:scaleX(0.915);transform-origin:0 0;-webkit-text-stroke:0.15px #161616">10: ...</div><div class="t" style="left:792.7px;top:206.72px;font-size:9.6px;color:#161616;transform:scaleX(0.915);transform-origin:0 0;-webkit-text-stroke:0.15px #161616">2.85563..3.08173 Å</div><div class="t" style="left:464.6px;top:220.97px;font-size:9.6px;color:#161616;transform:scaleX(0.93);transform-origin:0 0;-webkit-text-stroke:0.15px #161616">Radius of spherical domain:</div><div class="t" style="left:579.5px;top:220.97px;font-size:9.6px;color:#161616;transform:scaleX(0.915);transform-origin:0 0;-webkit-text-stroke:0.15px #161616">Rsd=1.3648 Å (V=10.6488 Å**3)</div><div class="t" style="left:464.6px;top:235.22px;font-size:9.6px;color:#161616;transform:scaleX(0.93);transform-origin:0 0;-webkit-text-stroke:0.15px #161616">19 neighbour(s)</div><div class="t" style="left:579.5px;top:235.22px;font-size:9.6px;color:#161616;transform:scaleX(0.915);transform-origin:0 0;-webkit-text-stroke:0.15px #161616">Atom (x/a, y/b, z/c)</div><div class="t" style="left:792.7px;top:235.22px;font-size:9.6px;color:#161616;transform:scaleX(0.915);transform-origin:0 0;-webkit-text-stroke:0.15px #161616">Dist. from center</div><div class="t" style="left:884.2px;top:235.22px;font-size:9.6px;color:#161616;transform:scaleX(0.915);transform-origin:0 0;-webkit-text-stroke:0.15px #161616">Solid angle-%</div><div class="t" style="left:464.6px;top:249.47px;font-size:9.6px;color:#161616;transform:scaleX(0.93);transform-origin:0 0;-webkit-text-stroke:0.15px #161616">  1:</div><div class="t" style="left:579.5px;top:249.47px;font-size:9.6px;color:#161616;transform:scaleX(0.915);transform-origin:0 0;-webkit-text-stroke:0.15px #161616">"FeT" (x, y, z) : 1/8, 1/8, 1/8</div><div class="t" style="left:792.7px;top:249.47px;font-size:9.6px;color:#161616;transform:scaleX(0.915);transform-origin:0 0;-webkit-text-stroke:0.15px #161616">1.88717 Å : &lt;12&gt;</div><div class="t" style="left:884.2px;top:249.47px;font-size:9.6px;color:#161616;transform:scaleX(0.915);transform-origin:0 0;-webkit-text-stroke:0.15px #161616">22.899</div><div class="t" style="left:464.6px;top:263.72px;font-size:9.6px;color:#161616;transform:scaleX(0.93);transform-origin:0 0;-webkit-text-stroke:0.15px #161616">  2:</div><div class="t" style="left:579.5px;top:263.72px;font-size:9.6px;color:#161616;transform:scaleX(0.915);transform-origin:0 0;-webkit-text-stroke:0.15px #161616">"FeM" (1-y, -1/4+x, -1/4+z) : 1/2, 1/4, 1/4</div><div class="t" style="left:792.7px;top:263.72px;font-size:9.6px;color:#161616;transform:scaleX(0.915);transform-origin:0 0;-webkit-text-stroke:0.15px #161616">2.05998 Å : &lt;3&gt;</div><div class="t" style="left:884.2px;top:263.72px;font-size:9.6px;color:#161616;transform:scaleX(0.915);transform-origin:0 0;-webkit-text-stroke:0.15px #161616">8.68424</div><div class="t" style="left:464.6px;top:277.97px;font-size:9.6px;color:#161616;transform:scaleX(0.93);transform-origin:0 0;-webkit-text-stroke:0.15px #161616">  3:</div><div class="t" style="left:579.5px;top:277.97px;font-size:9.6px;color:#161616;transform:scaleX(0.915);transform-origin:0 0;-webkit-text-stroke:0.15px #161616">"FeM" (3/4-x, 3/4-y, z) : 1/4, 1/4, 1/2</div><div class="t" style="left:792.7px;top:277.97px;font-size:9.6px;color:#161616;transform:scaleX(0.915);transform-origin:0 0;-webkit-text-stroke:0.15px #161616">2.05998 Å : &lt;4&gt;</div><div class="t" style="left:884.2px;top:277.97px;font-size:9.6px;color:#161616;transform:scaleX(0.915);transform-origin:0 0;-webkit-text-stroke:0.15px #161616">16.6667</div><div class="t" style="left:464.6px;top:292.22px;font-size:9.6px;color:#161616;transform:scaleX(0.93);transform-origin:0 0;-webkit-text-stroke:0.15px #161616">  4:</div><div class="t" style="left:579.5px;top:292.22px;font-size:9.6px;color:#161616;transform:scaleX(0.915);transform-origin:0 0;-webkit-text-stroke:0.15px #161616">"FeM" (-1/4+y, 1-x, -1/4+z) : 1/4, 1/2, 1/4</div><div class="t" style="left:792.7px;top:292.22px;font-size:9.6px;color:#161616;transform:scaleX(0.915);transform-origin:0 0;-webkit-text-stroke:0.15px #161616">2.05998 Å : &lt;4&gt;</div><div class="t" style="left:884.2px;top:292.22px;font-size:9.6px;color:#161616;transform:scaleX(0.915);transform-origin:0 0;-webkit-text-stroke:0.15px #161616">16.6667</div><div class="t" style="left:464.6px;top:306.47px;font-size:9.6px;color:#161616;transform:scaleX(0.93);transform-origin:0 0;-webkit-text-stroke:0.15px #161616">* 5:</div><div class="t" style="left:579.5px;top:306.47px;font-size:9.6px;color:#161616;transform:scaleX(0.915);transform-origin:0 0;-webkit-text-stroke:0.15px #161616">"O" (3/4-x, 3/4-y, z) : 0.49524, 0.49524, 0.25476</div><div class="t" style="left:792.7px;top:306.47px;font-size:9.6px;color:#161616;transform:scaleX(0.915);transform-origin:0 0;-webkit-text-stroke:0.15px #161616">2.85563 Å : &lt;4&gt;</div><div class="t" style="left:884.2px;top:306.47px;font-size:9.6px;color:#161616;transform:scaleX(0.915);transform-origin:0 0;-webkit-text-stroke:0.15px #161616">0.166238</div><div class="t" style="left:464.6px;top:320.72px;font-size:9.6px;color:#161616;transform:scaleX(0.93);transform-origin:0 0;-webkit-text-stroke:0.15px #161616">  6:</div><div class="t" style="left:579.5px;top:320.72px;font-size:9.6px;color:#161616;transform:scaleX(0.915);transform-origin:0 0;-webkit-text-stroke:0.15px #161616">"O" (x, 3/4-y, 3/4-z) : 0.25476, 0.49524, 0.49524</div><div class="t" style="left:792.7px;top:320.72px;font-size:9.6px;color:#161616;transform:scaleX(0.915);transform-origin:0 0;-webkit-text-stroke:0.15px #161616">2.85563 Å : &lt;6&gt;</div><div class="t" style="left:884.2px;top:320.72px;font-size:9.6px;color:#161616;transform:scaleX(0.915);transform-origin:0 0;-webkit-text-stroke:0.15px #161616">0.721782</div><div class="t" style="left:464.6px;top:334.97px;font-size:9.6px;color:#161616;transform:scaleX(0.93);transform-origin:0 0;-webkit-text-stroke:0.15px #161616">  7:</div><div class="t" style="left:579.5px;top:334.97px;font-size:9.6px;color:#161616;transform:scaleX(0.915);transform-origin:0 0;-webkit-text-stroke:0.15px #161616">"O" (3/4-x, y, 3/4-z) : 0.49524, 0.25476, 0.49524</div><div class="t" style="left:792.7px;top:334.97px;font-size:9.6px;color:#161616;transform:scaleX(0.915);transform-origin:0 0;-webkit-text-stroke:0.15px #161616">2.85563 Å : &lt;6&gt;</div><div class="t" style="left:884.2px;top:334.97px;font-size:9.6px;color:#161616;transform:scaleX(0.915);transform-origin:0 0;-webkit-text-stroke:0.15px #161616">0.721782</div><div class="t" style="left:464.6px;top:349.22px;font-size:9.6px;color:#161616;transform:scaleX(0.93);transform-origin:0 0;-webkit-text-stroke:0.15px #161616">* 8:</div><div class="t" style="left:579.5px;top:349.22px;font-size:9.6px;color:#161616;transform:scaleX(0.915);transform-origin:0 0;-webkit-text-stroke:0.15px #161616">"O" (-1/4+x, 1/4+z, 1/2-y) : 0.00476, 0.50476, 0.245...</div><div class="t" style="left:792.7px;top:349.22px;font-size:9.6px;color:#161616;transform:scaleX(0.915);transform-origin:0 0;-webkit-text-stroke:0.15px #161616">2.96976 Å : &lt;7&gt;</div><div class="t" style="left:884.2px;top:349.22px;font-size:9.6px;color:#161616;transform:scaleX(0.915);transform-origin:0 0;-webkit-text-stroke:0.15px #161616">3.6513</div><div class="t" style="left:464.6px;top:363.47px;font-size:9.6px;color:#161616;transform:scaleX(0.93);transform-origin:0 0;-webkit-text-stroke:0.15px #161616">* 9:</div><div class="t" style="left:579.5px;top:363.47px;font-size:9.6px;color:#161616;transform:scaleX(0.915);transform-origin:0 0;-webkit-text-stroke:0.15px #161616">"O" (1/4+y, 1/2-x, -1/4+z) : 0.50476, 0.24524, 0.004...</div><div class="t" style="left:792.7px;top:363.47px;font-size:9.6px;color:#161616;transform:scaleX(0.915);transform-origin:0 0;-webkit-text-stroke:0.15px #161616">2.96976 Å : &lt;7&gt;</div><div class="t" style="left:884.2px;top:363.47px;font-size:9.6px;color:#161616;transform:scaleX(0.915);transform-origin:0 0;-webkit-text-stroke:0.15px #161616">3.6513</div><div class="t" style="left:464.6px;top:377.72px;font-size:9.6px;color:#161616;transform:scaleX(0.93);transform-origin:0 0;-webkit-text-stroke:0.15px #161616">*10:</div><div class="t" style="left:579.5px;top:377.72px;font-size:9.6px;color:#161616;transform:scaleX(0.915);transform-origin:0 0;-webkit-text-stroke:0.15px #161616">"O" (1/4+x, -1/4+z, 1/2-y) : 0.50476, 0.00476, 0.245...</div><div class="t" style="left:792.7px;top:377.72px;font-size:9.6px;color:#161616;transform:scaleX(0.915);transform-origin:0 0;-webkit-text-stroke:0.15px #161616">2.96976 Å : &lt;7&gt;</div><div class="t" style="left:884.2px;top:377.72px;font-size:9.6px;color:#161616;transform:scaleX(0.915);transform-origin:0 0;-webkit-text-stroke:0.15px #161616">3.6513</div><div class="t" style="left:464.6px;top:391.97px;font-size:9.6px;color:#161616;transform:scaleX(0.93);transform-origin:0 0;-webkit-text-stroke:0.15px #161616">*11:</div><div class="t" style="left:579.5px;top:391.97px;font-size:9.6px;color:#161616;transform:scaleX(0.915);transform-origin:0 0;-webkit-text-stroke:0.15px #161616">"O" (1/2-y, 1/4+x, -1/4+z) : 0.24524, 0.50476, 0.004...</div><div class="t" style="left:792.7px;top:391.97px;font-size:9.6px;color:#161616;transform:scaleX(0.915);transform-origin:0 0;-webkit-text-stroke:0.15px #161616">2.96976 Å : &lt;7&gt;</div><div class="t" style="left:884.2px;top:391.97px;font-size:9.6px;color:#161616;transform:scaleX(0.915);transform-origin:0 0;-webkit-text-stroke:0.15px #161616">3.6513</div><div class="t" style="left:464.6px;top:406.22px;font-size:9.6px;color:#161616;transform:scaleX(0.93);transform-origin:0 0;-webkit-text-stroke:0.15px #161616">*12:</div><div class="t" style="left:579.5px;top:406.22px;font-size:9.6px;color:#161616;transform:scaleX(0.915);transform-origin:0 0;-webkit-text-stroke:0.15px #161616">"O" (-1/4+y, 1/2-x, 1/4+z) : 0.00476, 0.24524, 0.504...</div><div class="t" style="left:792.7px;top:406.22px;font-size:9.6px;color:#161616;transform:scaleX(0.915);transform-origin:0 0;-webkit-text-stroke:0.15px #161616">2.96976 Å : &lt;7&gt;</div><div class="t" style="left:884.2px;top:406.22px;font-size:9.6px;color:#161616;transform:scaleX(0.915);transform-origin:0 0;-webkit-text-stroke:0.15px #161616">3.6513</div><div class="t" style="left:464.6px;top:420.47px;font-size:9.6px;color:#161616;transform:scaleX(0.93);transform-origin:0 0;-webkit-text-stroke:0.15px #161616">*13:</div><div class="t" style="left:579.5px;top:420.47px;font-size:9.6px;color:#161616;transform:scaleX(0.915);transform-origin:0 0;-webkit-text-stroke:0.15px #161616">"O" (1/2-y, -1/4+x, 1/4+z) : 0.24524, 0.00476, 0.504...</div><div class="t" style="left:792.7px;top:420.47px;font-size:9.6px;color:#161616;transform:scaleX(0.915);transform-origin:0 0;-webkit-text-stroke:0.15px #161616">2.96976 Å : &lt;7&gt;</div><div class="t" style="left:884.2px;top:420.47px;font-size:9.6px;color:#161616;transform:scaleX(0.915);transform-origin:0 0;-webkit-text-stroke:0.15px #161616">3.6513</div><div class="t" style="left:464.6px;top:434.72px;font-size:9.6px;color:#161616;transform:scaleX(0.93);transform-origin:0 0;-webkit-text-stroke:0.15px #161616">*14:</div><div class="t" style="left:579.5px;top:434.72px;font-size:9.6px;color:#161616;transform:scaleX(0.915);transform-origin:0 0;-webkit-text-stroke:0.15px #161616">"O" (x, 1/4-y, 1/4-z) : 0.25476, -0.00476, -0.00476</div><div class="t" style="left:792.7px;top:434.72px;font-size:9.6px;color:#161616;transform:scaleX(0.915);transform-origin:0 0;-webkit-text-stroke:0.15px #161616">3.08173 Å : &lt;3&gt;</div><div class="t" style="left:884.2px;top:434.72px;font-size:9.6px;color:#161616;transform:scaleX(0.915);transform-origin:0 0;-webkit-text-stroke:0.15px #161616">0.65433</div><div class="t" style="left:464.6px;top:448.97px;font-size:9.6px;color:#161616;transform:scaleX(0.93);transform-origin:0 0;-webkit-text-stroke:0.15px #161616">*15:</div><div class="t" style="left:579.5px;top:448.97px;font-size:9.6px;color:#161616;transform:scaleX(0.915);transform-origin:0 0;-webkit-text-stroke:0.15px #161616">"O" (1/4-x, y, 1/4-z) : -0.00476, 0.25476, -0.00476</div><div class="t" style="left:792.7px;top:448.97px;font-size:9.6px;color:#161616;transform:scaleX(0.915);transform-origin:0 0;-webkit-text-stroke:0.15px #161616">3.08173 Å : &lt;3&gt;</div><div class="t" style="left:884.2px;top:448.97px;font-size:9.6px;color:#161616;transform:scaleX(0.915);transform-origin:0 0;-webkit-text-stroke:0.15px #161616">0.65433</div><div class="t" style="left:464.6px;top:463.22px;font-size:9.6px;color:#161616;transform:scaleX(0.93);transform-origin:0 0;-webkit-text-stroke:0.15px #161616">*16:</div><div class="t" style="left:579.5px;top:463.22px;font-size:9.6px;color:#161616;transform:scaleX(0.915);transform-origin:0 0;-webkit-text-stroke:0.15px #161616">"O" (1/4-x, 1/4-y, z) : -0.00476, -0.00476, 0.25476</div><div class="t" style="left:792.7px;top:463.22px;font-size:9.6px;color:#161616;transform:scaleX(0.915);transform-origin:0 0;-webkit-text-stroke:0.15px #161616">3.08173 Å : &lt;3&gt;</div><div class="t" style="left:884.2px;top:463.22px;font-size:9.6px;color:#161616;transform:scaleX(0.915);transform-origin:0 0;-webkit-text-stroke:0.15px #161616">0.65433</div><div class="t" style="left:466.1px;top:477.47px;font-size:9.6px;color:#161616;transform:scaleX(0.93);transform-origin:0 0;-webkit-text-stroke:0.15px #161616">17:</div><div class="t" style="left:579.5px;top:477.47px;font-size:9.6px;color:#161616;transform:scaleX(0.915);transform-origin:0 0;-webkit-text-stroke:0.15px #161616">"FeT" (1/2-y, 1/4+x, -1/4+z) : 3/8, 3/8, -1/8</div><div class="t" style="left:792.7px;top:477.47px;font-size:9.6px;color:#161616;transform:scaleX(0.915);transform-origin:0 0;-webkit-text-stroke:0.15px #161616">3.4938 Å : &lt;3&gt;</div><div class="t" style="left:884.2px;top:477.47px;font-size:9.6px;color:#161616;transform:scaleX(0.915);transform-origin:0 0;-webkit-text-stroke:0.15px #161616">0.354946</div><div class="t" style="left:466.1px;top:491.72px;font-size:9.6px;color:#161616;transform:scaleX(0.93);transform-origin:0 0;-webkit-text-stroke:0.15px #161616">18:</div><div class="t" style="left:579.5px;top:491.72px;font-size:9.6px;color:#161616;transform:scaleX(0.915);transform-origin:0 0;-webkit-text-stroke:0.15px #161616">"FeT" (-y, 1/4+x, 1/4+z) : -1/8, 3/8, 3/8</div><div class="t" style="left:792.7px;top:491.72px;font-size:9.6px;color:#161616;transform:scaleX(0.915);transform-origin:0 0;-webkit-text-stroke:0.15px #161616">3.4938 Å : &lt;3&gt;</div><div class="t" style="left:884.2px;top:491.72px;font-size:9.6px;color:#161616;transform:scaleX(0.915);transform-origin:0 0;-webkit-text-stroke:0.15px #161616">0.354946</div><div class="t" style="left:466.1px;top:505.97px;font-size:9.6px;color:#161616;transform:scaleX(0.93);transform-origin:0 0;-webkit-text-stroke:0.15px #161616">19:</div><div class="t" style="left:579.5px;top:505.97px;font-size:9.6px;color:#161616;transform:scaleX(0.915);transform-origin:0 0;-webkit-text-stroke:0.15px #161616">"FeT" (1/2-y, -1/4+x, 1/4+z) : 3/8, -1/8, 3/8</div><div class="t" style="left:792.7px;top:505.97px;font-size:9.6px;color:#161616;transform:scaleX(0.915);transform-origin:0 0;-webkit-text-stroke:0.15px #161616">3.4938 Å : &lt;3&gt;</div><div class="t" style="left:884.2px;top:505.97px;font-size:9.6px;color:#161616;transform:scaleX(0.915);transform-origin:0 0;-webkit-text-stroke:0.15px #161616">0.354946</div><div class="t" style="left:464.6px;top:520.22px;font-size:9.6px;color:#161616;transform:scaleX(0.93);transform-origin:0 0;-webkit-text-stroke:0.15px #161616">34 vertices</div><div class="t" style="left:579.5px;top:520.22px;font-size:9.6px;color:#161616;transform:scaleX(0.915);transform-origin:0 0;-webkit-text-stroke:0.15px #161616">Cartesian coordinates rel. to center</div><div class="t" style="left:792.7px;top:520.22px;font-size:9.6px;color:#161616;transform:scaleX(0.915);transform-origin:0 0;-webkit-text-stroke:0.15px #161616">Dist. from center</div><div class="t" style="left:464.6px;top:534.47px;font-size:9.6px;color:#161616;transform:scaleX(0.93);transform-origin:0 0;-webkit-text-stroke:0.15px #161616">  1:</div><div class="t" style="left:579.5px;top:534.47px;font-size:9.6px;color:#161616;transform:scaleX(0.915);transform-origin:0 0;-webkit-text-stroke:0.15px #161616">0.54478, -1.53125, -0.64786</div><div class="t" style="left:792.7px;top:534.47px;font-size:9.6px;color:#161616;transform:scaleX(0.915);transform-origin:0 0;-webkit-text-stroke:0.15px #161616">1.74964 Å</div><div class="a" style="left:460.3px;top:540.5px;width:485px;height:1.5px;background:#fafafa"></div><div class="a" style="left:945.5px;top:145px;width:12px;height:397px;background:#efefef;border-left:1px solid #e4e4e4"></div><svg style="left:948px;top:151px" width="6" height="4" viewBox="0 0 6 4"><path d="M0 3.5H6L3 0Z" fill="#333"/></svg><div class="a" style="left:946.3px;top:160.2px;width:11px;height:158px;background:linear-gradient(90deg,#e8e8e8,#d4d4d4 50%,#c8c8c8);border:1px solid #b4b4b4;border-radius:2px"></div><svg style="left:948.5px;top:236px" width="6" height="4" viewBox="0 0 6 4"><path d="M0 0.5H6M0 2H6M0 3.5H6" stroke="#8a8a8a" stroke-width="0.6"/></svg><svg style="left:948px;top:533.5px" width="6" height="4" viewBox="0 0 6 4"><path d="M0 0H6L3 3.5Z" fill="#333"/></svg><div class="a" style="left:958px;top:53.8px;width:2px;height:488px;background:#e8e8e8"></div>
<div class="a" style="left:0px;top:541.8px;width:960px;height:20.2px;background:#9fabc2"></div><div class="a" style="left:0px;top:541.8px;width:960px;height:1px;background:#dfe3ea"></div><div class="a" style="left:0.5px;top:542.8px;width:521px;height:18.7px;background:linear-gradient(#cdd4df,#c3cbd8);border-radius:2px"></div><div class="a" style="left:513.5px;top:542.8px;width:8px;height:18.7px;background:#d5dbe5"></div><svg style="left:514.5px;top:553px" width="6" height="6" viewBox="0 0 6 6"><path d="M1 0.5H5" stroke="#333" stroke-width="0.6"/><path d="M0.8 2.5H5.2L3 4.6Z" fill="#222"/></svg><div class="a" style="left:523.5px;top:542.8px;width:181px;height:18.7px;background:linear-gradient(#cdd4df,#c3cbd8);border-radius:2px"></div><div class="a" style="left:696.5px;top:542.8px;width:8px;height:18.7px;background:#d5dbe5"></div><svg style="left:697.5px;top:553px" width="6" height="6" viewBox="0 0 6 6"><path d="M1 0.5H5" stroke="#333" stroke-width="0.6"/><path d="M0.8 2.5H5.2L3 4.6Z" fill="#222"/></svg><div class="a" style="left:706.5px;top:542.8px;width:81px;height:18.7px;background:linear-gradient(#cdd4df,#c3cbd8);border-radius:2px"></div><div class="a" style="left:779.5px;top:542.8px;width:8px;height:18.7px;background:#d5dbe5"></div><svg style="left:780.5px;top:553px" width="6" height="6" viewBox="0 0 6 6"><path d="M1 0.5H5" stroke="#333" stroke-width="0.6"/><path d="M0.8 2.5H5.2L3 4.6Z" fill="#222"/></svg><div class="a" style="left:4px;top:546px;width:1.5px;height:1.5px;background:#6a7488;box-shadow:0.7px 0.7px 0 #f4f6fa"></div><div class="a" style="left:4px;top:549px;width:1.5px;height:1.5px;background:#6a7488;box-shadow:0.7px 0.7px 0 #f4f6fa"></div><div class="a" style="left:4px;top:552px;width:1.5px;height:1.5px;background:#6a7488;box-shadow:0.7px 0.7px 0 #f4f6fa"></div><div class="a" style="left:4px;top:555px;width:1.5px;height:1.5px;background:#6a7488;box-shadow:0.7px 0.7px 0 #f4f6fa"></div><div class="a" style="left:527px;top:546px;width:1.5px;height:1.5px;background:#6a7488;box-shadow:0.7px 0.7px 0 #f4f6fa"></div><div class="a" style="left:527px;top:549px;width:1.5px;height:1.5px;background:#6a7488;box-shadow:0.7px 0.7px 0 #f4f6fa"></div><div class="a" style="left:527px;top:552px;width:1.5px;height:1.5px;background:#6a7488;box-shadow:0.7px 0.7px 0 #f4f6fa"></div><div class="a" style="left:527px;top:555px;width:1.5px;height:1.5px;background:#6a7488;box-shadow:0.7px 0.7px 0 #f4f6fa"></div><div class="a" style="left:709px;top:546px;width:1.5px;height:1.5px;background:#6a7488;box-shadow:0.7px 0.7px 0 #f4f6fa"></div><div class="a" style="left:709px;top:549px;width:1.5px;height:1.5px;background:#6a7488;box-shadow:0.7px 0.7px 0 #f4f6fa"></div><div class="a" style="left:709px;top:552px;width:1.5px;height:1.5px;background:#6a7488;box-shadow:0.7px 0.7px 0 #f4f6fa"></div><div class="a" style="left:709px;top:555px;width:1.5px;height:1.5px;background:#6a7488;box-shadow:0.7px 0.7px 0 #f4f6fa"></div><svg style="left:10px;top:546px" width="12" height="12" viewBox="0 0 12 12"><rect x="0.5" y="1" width="11" height="10" fill="#e4ecf8" stroke="#7a8ab0" stroke-width="0.6"/><circle cx="6" cy="6" r="3" fill="none" stroke="#f0c020" stroke-width="2"/></svg><svg style="left:26px;top:546px" width="12" height="12" viewBox="0 0 12 12"><rect x="0.5" y="0.5" width="10" height="8" fill="#fafcff" stroke="#223" stroke-width="1"/><rect x="2" y="2.5" width="5" height="3" fill="#bbb"/><path d="M5 9.5H9V7.5L12 10L9 12.5V10.5H5Z" fill="#20b0e0" stroke="#223" stroke-width="0.5"/></svg><svg style="left:42px;top:546px" width="12" height="12" viewBox="0 0 12 12"><path d="M5 4L11.5 11" stroke="#111" stroke-width="1.8"/><circle cx="3" cy="5" r="1.6" fill="#f0e020"/><circle cx="5" cy="8.5" r="1.6" fill="#f0e020"/><circle cx="2" cy="10" r="1.4" fill="#f0e020"/><circle cx="7.5" cy="2" r="1.3" fill="#f0e020"/></svg><svg style="left:59px;top:546px" width="12" height="12" viewBox="0 0 12 12"><rect x="0.5" y="0.5" width="11" height="9.5" fill="#fafafa" stroke="#222" stroke-width="0.9"/><path d="M2 11L8 4" stroke="#a05010" stroke-width="1.4"/><circle cx="7" cy="5" r="2" fill="none" stroke="#222" stroke-width="0.8"/></svg><svg style="left:74px;top:550.5px" width="4" height="3" viewBox="0 0 4 3"><path d="M0 0H4L2 2.5Z" fill="#1a1a1a"/></svg><div class="a" style="left:84px;top:546px;width:1px;height:12px;background:#8a94a6;box-shadow:1px 0 0 rgba(240,244,250,0.45)"></div><svg style="left:90px;top:546px" width="11" height="12" viewBox="0 0 11 12"><path d="M1 6L5 1.5L10 6L6 10.5Z" fill="#f4ec90" stroke="#111" stroke-width="1.1"/><path d="M1 6L5 1.5L7 3.5L3 8Z" fill="#222"/></svg><svg style="left:105px;top:546px" width="13" height="12" viewBox="0 0 13 12"><circle cx="5" cy="3.2" r="2.6" fill="#f0e020" stroke="#222" stroke-width="0.7"/><circle cx="10" cy="3.2" r="2.6" fill="#f0e020" stroke="#222" stroke-width="0.7"/><circle cx="5" cy="8.8" r="2.6" fill="#f0e020" stroke="#222" stroke-width="0.7"/><circle cx="10" cy="8.8" r="2.6" fill="#f0e020" stroke="#222" stroke-width="0.7"/><path d="M0 3H3M1.5 1.5V4.5" stroke="#111" stroke-width="1"/></svg><svg style="left:121px;top:546px" width="13" height="12" viewBox="0 0 13 12"><path d="M0.5 6H5M2.7 3.8V8.2" stroke="#111" stroke-width="1.3"/><path d="M5 6H7" stroke="#111" stroke-width="1"/><circle cx="9.5" cy="6" r="2.8" fill="#f0e020" stroke="#222" stroke-width="0.7"/></svg><svg style="left:139px;top:546px" width="12" height="12" viewBox="0 0 12 12"><circle cx="2.5" cy="9.5" r="2" fill="none" stroke="#111" stroke-width="1"/><circle cx="9.5" cy="9.5" r="2" fill="none" stroke="#111" stroke-width="1"/><path d="M3.5 3Q6 0 8 3Q8 5 6 6V7.5M6 7.5L3 8.5M6 7.5L9 8.5" fill="none" stroke="#111" stroke-width="1.1"/></svg><svg style="left:154px;top:546px" width="13" height="12" viewBox="0 0 13 12"><rect x="1.5" y="1.5" width="10" height="9" fill="#c8d8f8" stroke="#2030c0" stroke-width="1"/><path d="M1.5 1.5L11.5 10.5M11.5 1.5L1.5 10.5" stroke="#2030c0" stroke-width="1"/><circle cx="1.5" cy="1.5" r="1.3" fill="#2030c0"/><circle cx="11.5" cy="1.5" r="1.3" fill="#2030c0"/><circle cx="1.5" cy="10.5" r="1.3" fill="#2030c0"/><circle cx="11.5" cy="10.5" r="1.3" fill="#2030c0"/></svg><svg style="left:171px;top:546px" width="12" height="12" viewBox="0 0 12 12"><circle cx="2.5" cy="9.5" r="2" fill="none" stroke="#999" stroke-width="1"/><circle cx="9.5" cy="9.5" r="2" fill="none" stroke="#999" stroke-width="1"/><path d="M4 1H8V6L6 7.5L4 6Z" fill="none" stroke="#999" stroke-width="1"/></svg><svg style="left:187.5px;top:546px" width="12" height="12" viewBox="0 0 12 12"><circle cx="6" cy="6" r="5" fill="#fff" stroke="#777" stroke-width="0.8" stroke-dasharray="1.2,0.8"/><circle cx="6" cy="6" r="3.2" fill="#6a6a10"/></svg><svg style="left:203px;top:550.5px" width="4" height="3" viewBox="0 0 4 3"><path d="M0 0H4L2 2.5Z" fill="#1a1a1a"/></svg><div class="a" style="left:211px;top:546px;width:1px;height:12px;background:#8a94a6;box-shadow:1px 0 0 rgba(240,244,250,0.45)"></div><svg style="left:216px;top:546px" width="12" height="12" viewBox="0 0 12 12"><path d="M3 1.5H9L11.5 6L9 10.5H3L0.5 6Z" fill="none" stroke="#1a2ad0" stroke-width="1.6"/></svg><svg style="left:234px;top:546px" width="12" height="12" viewBox="0 0 12 12"><path d="M3 1.5H9L11.5 6L9 10.5H3L0.5 6Z" fill="none" stroke="#f0e020" stroke-width="1.6"/><path d="M3 1.5H9" stroke="#1a2ad0" stroke-width="1.6"/></svg><svg style="left:250px;top:546px" width="12" height="12" viewBox="0 0 12 12"><ellipse cx="6" cy="3.5" rx="5" ry="2.5" fill="none" stroke="#2a3ac0" stroke-width="1.1"/><ellipse cx="6" cy="8.5" rx="5" ry="2.5" fill="none" stroke="#2a3ac0" stroke-width="1.1"/><path d="M3 3.5V8.5" stroke="#2a3ac0" stroke-width="1"/></svg><svg style="left:266px;top:546px" width="13" height="12" viewBox="0 0 13 12"><path d="M1 1L12 11M12 1L1 11M6.5 1V11M1 6H12" stroke="#1a2ad0" stroke-width="1.2" stroke-dasharray="1.5,0.8"/><path d="M2 2L11 10M11 2L2 10" stroke="#111" stroke-width="1.3"/></svg><svg style="left:283px;top:546px" width="13" height="12" viewBox="0 0 13 12"><path d="M1 1L12 11M12 1L1 11M6.5 1V11M1 6H12" stroke="#d02020" stroke-width="1.2" stroke-dasharray="1.5,0.8"/><path d="M2 2L11 10M11 2L2 10" stroke="#111" stroke-width="1.3"/></svg><div class="a" style="left:299px;top:546px;width:1px;height:12px;background:#8a94a6;box-shadow:1px 0 0 rgba(240,244,250,0.45)"></div><svg style="left:304px;top:546px" width="12" height="12" viewBox="0 0 12 12"><path d="M3 9L8.5 3.5" stroke="#2040b0" stroke-width="1.3"/><circle cx="9" cy="3" r="2.5" fill="#f0e020" stroke="#222" stroke-width="0.6"/><circle cx="2.5" cy="9.5" r="2" fill="none" stroke="#2040b0" stroke-width="1"/></svg><svg style="left:320px;top:546px" width="13" height="12" viewBox="0 0 13 12"><path d="M3 2Q6.5 5 10 2M3 10Q6.5 7 10 10M3 2Q5.5 6 3 10M10 2Q7.5 6 10 10" fill="none" stroke="#1a2ad0" stroke-width="1.2"/><circle cx="2" cy="1.5" r="1.5" fill="#f0e020"/><circle cx="11" cy="1.5" r="1.5" fill="#f0e020"/><circle cx="2" cy="10.5" r="1.5" fill="#f0e020"/><circle cx="11" cy="10.5" r="1.5" fill="#f0e020"/></svg><svg style="left:336px;top:546px" width="13" height="12" viewBox="0 0 13 12"><ellipse cx="7" cy="3.5" rx="4.5" ry="2.5" fill="none" stroke="#e0d030" stroke-width="1.1"/><ellipse cx="5" cy="8.5" rx="4.5" ry="2.5" fill="none" stroke="#222" stroke-width="1.1"/></svg><svg style="left:354px;top:546px" width="12" height="12" viewBox="0 0 12 12"><ellipse cx="7" cy="3.5" rx="4.5" ry="2.5" fill="none" stroke="#999" stroke-width="1"/><ellipse cx="5" cy="8.5" rx="4.5" ry="2.5" fill="none" stroke="#999" stroke-width="1"/></svg><div class="a" style="left:369.5px;top:546px;width:1px;height:12px;background:#8a94a6;box-shadow:1px 0 0 rgba(240,244,250,0.45)"></div><svg style="left:374px;top:546px" width="13" height="12" viewBox="0 0 13 12"><rect x="0.8" y="0.8" width="11.4" height="10.4" fill="#dde4f8" stroke="#1a2ad0" stroke-width="1.2"/><rect x="3" y="3" width="7" height="6" fill="none" stroke="#1a2ad0" stroke-width="1"/><path d="M0.8 0.8L3 3M12.2 0.8L10 3M0.8 11.2L3 9M12.2 11.2L10 9" stroke="#1a2ad0" stroke-width="0.8"/></svg><svg style="left:391px;top:546px" width="12" height="12" viewBox="0 0 12 12"><path d="M6 0.5L11.5 6L6 11.5L0.5 6Z" fill="#f0d010" stroke="#111" stroke-width="0.9"/><path d="M6 0.5V11.5M0.5 6H11.5" stroke="#111" stroke-width="1"/></svg><svg style="left:407px;top:546px" width="14" height="12" viewBox="0 0 14 12"><path d="M1 2L13 10M13 2L1 10M1 6H13" stroke="#e01818" stroke-width="2"/><path d="M3 3L11 9M11 3L3 9" stroke="#1a2ad0" stroke-width="0.8" stroke-dasharray="1,1"/></svg><svg style="left:422.5px;top:550.5px" width="4" height="3" viewBox="0 0 4 3"><path d="M0 0H4L2 2.5Z" fill="#1a1a1a"/></svg><svg style="left:431px;top:546px" width="14" height="12" viewBox="0 0 14 12"><circle cx="3" cy="9" r="2.4" fill="#f0e020" stroke="#222" stroke-width="0.6"/><path d="M4 7L7 4.5" stroke="#222" stroke-width="0.7"/></svg><div class="t" style="left:437.5px;top:548.00px;font-size:6.5px;color:#111;font-weight:bold">Fe</div><div class="a" style="left:449px;top:546px;width:1px;height:12px;background:#8a94a6;box-shadow:1px 0 0 rgba(240,244,250,0.45)"></div><svg style="left:452.5px;top:546px" width="13" height="12" viewBox="0 0 13 12"><rect x="0.6" y="0.6" width="11.8" height="10.8" fill="#fff" stroke="#1a2ad0" stroke-width="1.2"/><path d="M6.5 1.5L8.5 4H4.5ZM6.5 10.5L8.5 8H4.5ZM1.5 6L4 4V8ZM11.5 6L9 4V8Z" fill="#111"/><circle cx="6.5" cy="6" r="1.8" fill="#f0e020"/></svg><svg style="left:468px;top:550.5px" width="4" height="3" viewBox="0 0 4 3"><path d="M0 0H4L2 2.5Z" fill="#1a1a1a"/></svg><div class="t" style="left:484px;top:548.19px;font-size:11px;color:#1a2ad0;font-family:'Liberation Serif';font-style:italic;font-weight:bold">M</div><svg style="left:499px;top:546px" width="12" height="12" viewBox="0 0 12 12"><rect x="0.5" y="0.5" width="11" height="11" fill="#dde8f8" stroke="#6878a8" stroke-width="1"/><circle cx="6" cy="6" r="3.8" fill="#e04040"/><circle cx="6.5" cy="6.5" r="2.6" fill="#20a080"/></svg><div class="a" style="left:530.5px;top:543.5px;width:16px;height:17.5px;background:linear-gradient(#fff8d8,#fde9a8);border:1px solid #e8c870;border-radius:2px"></div><svg style="left:534px;top:546px" width="8" height="12" viewBox="0 0 8 12"><path d="M1 0.5V10L3.5 7.5L5.5 11.5L7 10.8L5 7H8Z" fill="#fafafa" stroke="#222" stroke-width="0.8"/></svg><svg style="left:550px;top:546px" width="12" height="12" viewBox="0 0 12 12"><circle cx="6" cy="6" r="3.5" fill="none" stroke="#111" stroke-width="1.6"/><path d="M6 0V12M0 6H12" stroke="#111" stroke-width="1.2"/><path d="M6 0L4.5 2H7.5ZM6 12L4.5 10H7.5ZM0 6L2 4.5V7.5ZM12 6L10 4.5V7.5Z" fill="#111"/></svg><svg style="left:566px;top:546px" width="11" height="12" viewBox="0 0 11 12"><path d="M9 6A3.8 3.8 0 1 1 6 2.3" fill="none" stroke="#111" stroke-width="1.8"/><path d="M5 0L9 2.5L5 5Z" fill="#111"/></svg><svg style="left:582.5px;top:546px" width="12" height="12" viewBox="0 0 12 12"><path d="M6 1V11M1 6H11" stroke="#111" stroke-width="1.8"/><path d="M6 0L3.5 3H8.5ZM6 12L3.5 9H8.5ZM0 6L3 3.5V8.5ZM12 6L9 3.5V8.5Z" fill="#111"/></svg><svg style="left:599px;top:546px" width="11" height="12" viewBox="0 0 11 12"><rect x="3" y="3.5" width="5" height="5" fill="none" stroke="#111" stroke-width="1.4"/><path d="M0.5 3V0.5H3M8 0.5H10.5V3M0.5 9V11.5H3M8 11.5H10.5V9" fill="none" stroke="#111" stroke-width="1.2"/></svg><svg style="left:615px;top:546px" width="11" height="12" viewBox="0 0 11 12"><path d="M10.5 1.5L1 6L10.5 10.5" fill="none" stroke="#111" stroke-width="1.4"/><path d="M6 3.5Q8 6 6 8.5" fill="none" stroke="#111" stroke-width="1.2"/></svg><svg style="left:631px;top:546px" width="11" height="12" viewBox="0 0 11 12"><path d="M0.5 11H10.5M1.5 9Q5.5 0 9.5 9" fill="none" stroke="#111" stroke-width="1.3"/><path d="M3.5 6H7.5M5.5 3V9" stroke="#111" stroke-width="1"/></svg><svg style="left:649px;top:546px" width="11" height="12" viewBox="0 0 11 12"><circle cx="5.5" cy="6" r="4.5" fill="none" stroke="#111" stroke-width="1.2" stroke-dasharray="1.2,1"/><circle cx="5.5" cy="6" r="2.2" fill="#111"/></svg><svg style="left:664.5px;top:546px" width="11" height="12" viewBox="0 0 11 12"><rect x="0.5" y="1" width="6" height="6" fill="#cfcfcf" stroke="#9a9a9a" stroke-width="0.6"/><rect x="4" y="5" width="6.5" height="6.5" fill="#aaa"/></svg><svg style="left:680px;top:546px" width="13" height="12" viewBox="0 0 13 12"><circle cx="4" cy="4" r="3.2" fill="#cfcfcf" stroke="#9a9a9a" stroke-width="0.6"/><rect x="5" y="5" width="7.5" height="6.5" fill="#999"/></svg><svg style="left:715px;top:546px" width="11" height="12" viewBox="0 0 11 12"><path d="M1 2V11H11M3.5 10V5M6 10V4M8.5 10V6" fill="none" stroke="#111" stroke-width="1.1"/></svg><svg style="left:731px;top:546px" width="12" height="12" viewBox="0 0 12 12"><path d="M6 1L11 10.5H1Z" fill="none" stroke="#111" stroke-width="1.1"/></svg><svg style="left:747.5px;top:546px" width="12" height="12" viewBox="0 0 12 12"><circle cx="4.5" cy="7.5" r="3.5" fill="#fafafa" stroke="#111" stroke-width="1.2"/><path d="M6.5 5L11 1" stroke="#111" stroke-width="1.6"/><path d="M3 3L1 0.5" stroke="#111" stroke-width="0.8"/></svg><svg style="left:764.5px;top:546px" width="12" height="12" viewBox="0 0 12 12"><path d="M1 7L6 2H11.5V6L6.5 10.5H1Z" fill="#fafafa" stroke="#111" stroke-width="1.1"/><path d="M6 2V6.5M6 6.5H11.5M6 6.5L1 10.5" fill="none" stroke="#111" stroke-width="0.8"/></svg><div class="a" style="left:0px;top:562px;width:960px;height:15px;background:#243452"></div><div class="a" style="left:402.5px;top:563px;width:1px;height:14px;background:#8a94a8"></div><div class="a" style="left:480.5px;top:563px;width:1px;height:14px;background:#8a94a8"></div><div class="a" style="left:500.5px;top:563px;width:1px;height:14px;background:#8a94a8"></div><div class="a" style="left:521.9px;top:563px;width:1px;height:14px;background:#8a94a8"></div><div class="a" style="left:542.7px;top:563px;width:1px;height:14px;background:#8a94a8"></div><div class="a" style="left:671.3px;top:563px;width:1px;height:14px;background:#8a94a8"></div><div class="a" style="left:704.7px;top:563px;width:1px;height:14px;background:#8a94a8"></div><div class="a" style="left:758px;top:563px;width:1px;height:14px;background:#8a94a8"></div><div class="a" style="left:811.4px;top:563px;width:1px;height:14px;background:#8a94a8"></div><div class="a" style="left:864.5px;top:563px;width:1px;height:14px;background:#8a94a8"></div><div class="a" style="left:912.3px;top:563px;width:1px;height:14px;background:#8a94a8"></div><div class="a" style="left:544.7px;top:564px;width:76.2px;height:11.8px;background:#c2cddc;border:1px solid #a4b0c4"></div><svg style="left:14px;top:573.5px" width="18" height="4" viewBox="0 0 18 4"><path d="M1 4Q9 -1.5 17 4" fill="none" stroke="#dfe6f0" stroke-width="1.4"/></svg><div class="t" style="left:2.5px;top:565.44px;font-size:9.4px;color:#eef0f4;transform:scaleX(0.8833);transform-origin:0 0;">For Help, press F1</div><div class="t" style="left:525.9px;top:565.44px;font-size:9.4px;color:#e8ecf2;transform:scaleX(0.8845);transform-origin:0 0;">Blar</div><div class="t" style="left:547.0px;top:565.44px;font-size:9.4px;color:#1e2a40;transform:scaleX(0.9406);transform-origin:0 0;">Manual</div><div class="t" style="left:624.8px;top:565.44px;font-size:9.4px;color:#e8ecf2;transform:scaleX(0.8556);transform-origin:0 0;">N. 1.51263 c</div><div class="a" style="left:670.2px;top:564.5px;width:0.8px;height:10px;background:#e8ecf2"></div><div class="t" style="left:708.4px;top:565.44px;font-size:9.4px;color:#e8ecf2;transform:scaleX(0.9371);transform-origin:0 0;">3 parms</div><div class="t" style="left:761.6px;top:565.44px;font-size:9.4px;color:#eef070;transform:scaleX(0.9283);transform-origin:0 0;">1/20 at.</div><div class="t" style="left:814.8px;top:565.44px;font-size:9.4px;color:#e8ecf2;transform:scaleX(0.9359);transform-origin:0 0;">19 bonds</div><div class="t" style="left:868.6px;top:565.44px;font-size:9.4px;color:#e8ecf2;transform:scaleX(0.9768);transform-origin:0 0;">polymeric</div><div class="t" style="left:916.0px;top:565.44px;font-size:9.4px;color:#e8ecf2;transform:scaleX(0.9652);transform-origin:0 0;">1 polyh.</div>
</body></html>
